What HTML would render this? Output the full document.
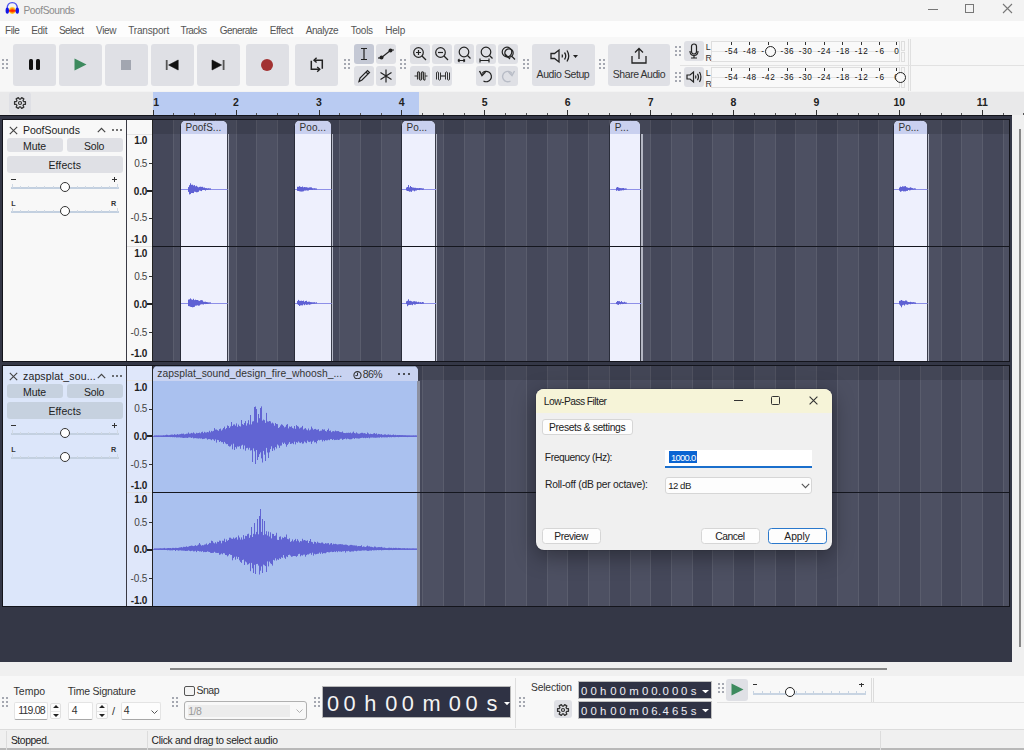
<!DOCTYPE html><html><head><meta charset="utf-8"><style>

*{box-sizing:border-box;margin:0;padding:0}
html,body{width:1024px;height:750px;overflow:hidden;background:#f3f3f3;font-family:"Liberation Sans",sans-serif;font-size:12px;color:#1a1a1a}
.ab{position:absolute}
.t{position:absolute;white-space:nowrap;line-height:1}
.btn{position:absolute;background:#dfe0e5;border-radius:3px}
.grip{position:absolute;width:6px;height:10px}
.grip i{position:absolute;width:2px;height:2px;background:#8a8e9a;border-radius:1px}

</style></head><body>
<div class="ab" style="left:0;top:0;width:1024px;height:21px;background:#f3f3f3"></div>
<svg class="ab" style="left:0;top:0" width="24" height="18" viewBox="0 0 24 18"><defs><radialGradient id="ag" cx="0.5" cy="0.55" r="0.55"><stop offset="0" stop-color="#ff2a00"/><stop offset="0.35" stop-color="#ff6a00"/><stop offset="0.7" stop-color="#ffc21a"/><stop offset="1" stop-color="#fff0a0" stop-opacity="0.6"/></radialGradient></defs><path d="M7.2 8.5 Q7.2 2.6 12.2 2.6 Q17.3 2.6 17.3 8.5" fill="none" stroke="#4b52ee" stroke-width="1.3"/><ellipse cx="12.3" cy="10.2" rx="3.6" ry="3.7" fill="url(#ag)"/><rect x="8.8" y="9.8" width="7" height="1.9" fill="#ff2200" opacity="0.85"/><ellipse cx="7.3" cy="10.6" rx="1.7" ry="3.2" fill="#1414e6"/><ellipse cx="17.3" cy="10.6" rx="1.7" ry="3.2" fill="#1414e6"/></svg>
<div class="t" style="left:23.50px;top:6.00px;font-size:10.20px;color:#8c8c8c;letter-spacing:-0.453px;">PoofSounds</div>
<div class="ab" style="left:928px;top:9px;width:10px;height:1px;background:#777"></div>
<div class="ab" style="left:965px;top:4px;width:9px;height:9px;border:1px solid #777"></div>
<svg class="ab" style="left:1002px;top:3px" width="11" height="11"><path d="M1 1 L10 10 M10 1 L1 10" stroke="#777" stroke-width="1.1"/></svg>
<div class="ab" style="left:0;top:21px;width:1024px;height:16px;background:#fdfdfd"></div>
<div class="t" style="left:5.10px;top:26.00px;font-size:10.00px;color:#555;letter-spacing:-0.438px;">File</div>
<div class="t" style="left:31.20px;top:26.00px;font-size:10.00px;color:#555;letter-spacing:-0.277px;">Edit</div>
<div class="t" style="left:59.00px;top:26.00px;font-size:10.00px;color:#555;letter-spacing:-0.558px;">Select</div>
<div class="t" style="left:96.00px;top:26.00px;font-size:10.00px;color:#555;letter-spacing:-0.331px;">View</div>
<div class="t" style="left:128.20px;top:26.00px;font-size:10.00px;color:#555;letter-spacing:-0.177px;">Transport</div>
<div class="t" style="left:180.50px;top:26.00px;font-size:10.00px;color:#555;letter-spacing:-0.606px;">Tracks</div>
<div class="t" style="left:219.80px;top:26.00px;font-size:10.00px;color:#555;letter-spacing:-0.556px;">Generate</div>
<div class="t" style="left:269.80px;top:26.00px;font-size:10.00px;color:#555;letter-spacing:-0.357px;">Effect</div>
<div class="t" style="left:305.70px;top:26.00px;font-size:10.00px;color:#555;letter-spacing:-0.446px;">Analyze</div>
<div class="t" style="left:350.80px;top:26.00px;font-size:10.00px;color:#555;letter-spacing:-0.261px;">Tools</div>
<div class="t" style="left:385.20px;top:26.00px;font-size:10.00px;color:#555;letter-spacing:-0.189px;">Help</div>
<div class="ab" style="left:0;top:37px;width:1024px;height:54px;background:#f7f7f7"></div>
<div class="grip" style="left:2px;top:59px"><i style="left:0px;top:0px"></i><i style="left:4px;top:0px"></i><i style="left:0px;top:4px"></i><i style="left:4px;top:4px"></i><i style="left:0px;top:8px"></i><i style="left:4px;top:8px"></i></div>
<div class="btn" style="left:13px;top:44px;width:43px;height:42px"></div>
<div class="btn" style="left:59px;top:44px;width:43px;height:42px"></div>
<div class="btn" style="left:105px;top:44px;width:43px;height:42px"></div>
<div class="btn" style="left:151px;top:44px;width:43px;height:42px"></div>
<div class="btn" style="left:197px;top:44px;width:43px;height:42px"></div>
<div class="btn" style="left:246px;top:44px;width:43px;height:42px"></div>
<div class="btn" style="left:295px;top:44px;width:43px;height:42px"></div>
<div class="ab" style="left:29px;top:59px;width:4px;height:11px;background:#111;border-radius:1.5px"></div>
<div class="ab" style="left:36px;top:59px;width:4px;height:11px;background:#111;border-radius:1.5px"></div>
<svg class="ab" style="left:74px;top:58px" width="13" height="13"><path d="M0.5 0.5 L12.5 6.5 L0.5 12.5 Z" fill="#3d8a5e"/></svg>
<div class="ab" style="left:121px;top:60px;width:10px;height:10px;background:#a2a6b0"></div>
<svg class="ab" style="left:165px;top:59px" width="14" height="12"><rect x="0.8" y="1" width="1.8" height="10" fill="#555"/><path d="M3.6 6 L13.2 1 L13.2 11 Z" fill="#111" stroke="#111" stroke-width="0.6" stroke-linejoin="round"/></svg>
<svg class="ab" style="left:211px;top:59px" width="14" height="12"><rect x="11.7" y="1" width="1.8" height="10" fill="#555"/><path d="M10.6 6 L1 1 L1 11 Z" fill="#111" stroke="#111" stroke-width="0.6" stroke-linejoin="round"/></svg>
<div class="ab" style="left:261px;top:59px;width:12px;height:12px;background:#a23232;border-radius:50%"></div>
<svg class="ab" style="left:306px;top:54px" width="22" height="20"><path d="M16.3 14.7 V6.2 H8.2" fill="none" stroke="#222" stroke-width="1.5"/><path d="M10.6 3.8 L8 6.2 L10.6 8.6" fill="none" stroke="#222" stroke-width="1.4"/><path d="M5.3 6.7 V15.3 H13.5" fill="none" stroke="#222" stroke-width="1.5"/><path d="M11.2 12.9 L13.8 15.3 L11.2 17.7" fill="none" stroke="#222" stroke-width="1.4"/></svg>
<div class="grip" style="left:344px;top:59px"><i style="left:0px;top:0px"></i><i style="left:4px;top:0px"></i><i style="left:0px;top:4px"></i><i style="left:4px;top:4px"></i><i style="left:0px;top:8px"></i><i style="left:4px;top:8px"></i></div>
<div class="btn" style="left:354px;top:44px;width:20px;height:20px;background:#c5c9d5"></div>
<div class="btn" style="left:376px;top:44px;width:20px;height:20px;background:#dfe0e5"></div>
<div class="btn" style="left:354px;top:66px;width:20px;height:20px;background:#dfe0e5"></div>
<div class="btn" style="left:376px;top:66px;width:20px;height:20px;background:#dfe0e5"></div>
<div class="btn" style="left:410px;top:44px;width:20px;height:20px;background:#dfe0e5"></div>
<div class="btn" style="left:432px;top:44px;width:20px;height:20px;background:#dfe0e5"></div>
<div class="btn" style="left:454px;top:44px;width:20px;height:20px;background:#dfe0e5"></div>
<div class="btn" style="left:476px;top:44px;width:20px;height:20px;background:#dfe0e5"></div>
<div class="btn" style="left:498px;top:44px;width:20px;height:20px;background:#dfe0e5"></div>
<div class="btn" style="left:410px;top:66px;width:20px;height:20px;background:#dfe0e5"></div>
<div class="btn" style="left:432px;top:66px;width:20px;height:20px;background:#dfe0e5"></div>
<div class="btn" style="left:476px;top:66px;width:20px;height:20px;background:#dfe0e5"></div>
<div class="btn" style="left:498px;top:66px;width:20px;height:20px;background:#dfe0e5"></div>
<div class="grip" style="left:400px;top:59px"><i style="left:0px;top:0px"></i><i style="left:4px;top:0px"></i><i style="left:0px;top:4px"></i><i style="left:4px;top:4px"></i><i style="left:0px;top:8px"></i><i style="left:4px;top:8px"></i></div>
<svg class="ab" style="left:354px;top:44px" width="20" height="20"><path d="M7 4.5 H13 M10 4.5 V15.5 M7 15.5 H13" stroke="#222" fill="none" stroke-width="1.2"/></svg>
<svg class="ab" style="left:376px;top:44px" width="20" height="20"><path d="M5 14 L15 6 M15 6 H18" stroke="#222" fill="none" stroke-width="1.2"/><circle cx="5.5" cy="13.5" r="2" fill="#222"/><circle cx="14.5" cy="6.5" r="2" fill="#222"/><path d="M2 14 H5" stroke="#222" fill="none" stroke-width="1.2"/></svg>
<svg class="ab" style="left:354px;top:66px" width="20" height="20"><path d="M5 15.5 L6 12 L13.5 4.5 L15.5 6.5 L8 14 Z M12 6 L14 8" stroke="#222" fill="none" stroke-width="1.2"/></svg>
<svg class="ab" style="left:376px;top:66px" width="20" height="20"><path d="M10 3.5 V16.5 M4.5 6.5 L15.5 13.5 M15.5 6.5 L4.5 13.5" stroke="#222" fill="none" stroke-width="1.2"/></svg>
<svg class="ab" style="left:410px;top:44px" width="20" height="20"><circle cx="8.5" cy="8.5" r="4.8" stroke="#222" fill="none" stroke-width="1.2"/><path d="M12 12 L16 16" stroke="#222" fill="none" stroke-width="1.2"/><path d="M6 8.5 H11 M8.5 6 V11" stroke="#222" fill="none" stroke-width="1.2"/></svg>
<svg class="ab" style="left:432px;top:44px" width="20" height="20"><circle cx="8.5" cy="8.5" r="4.8" stroke="#222" fill="none" stroke-width="1.2"/><path d="M12 12 L16 16" stroke="#222" fill="none" stroke-width="1.2"/><path d="M6 8.5 H11" stroke="#222" fill="none" stroke-width="1.2"/></svg>
<svg class="ab" style="left:454px;top:44px" width="20" height="20"><circle cx="10" cy="8" r="4.8" stroke="#222" fill="none" stroke-width="1.2"/><path d="M13.5 11.5 L16.5 14.5" stroke="#222" fill="none" stroke-width="1.2"/><path d="M4 16.5 H11 M4 16.5 L5.5 15 M4 16.5 L5.5 18 M11 16.5 L9.5 15 M11 16.5 L9.5 18" stroke="#222" fill="none" stroke-width="1.2"/></svg>
<svg class="ab" style="left:476px;top:44px" width="20" height="20"><circle cx="10" cy="8" r="4.8" stroke="#222" fill="none" stroke-width="1.2"/><path d="M13.5 11.5 L16.5 14.5" stroke="#222" fill="none" stroke-width="1.2"/><path d="M4 16.5 H13 M4 14.5 V18.5 M13 14.5 V18.5" stroke="#222" fill="none" stroke-width="1.2"/></svg>
<svg class="ab" style="left:498px;top:44px" width="20" height="20"><circle cx="9" cy="8" r="4.8" stroke="#222" fill="none" stroke-width="1.2"/><circle cx="11" cy="9" r="4.2" stroke="#222" fill="none" stroke-width="1.2"/><path d="M14 12.5 L17 15.5 M7 10 L12 15" stroke="#222" fill="none" stroke-width="1.2"/></svg>
<svg class="ab" style="left:410px;top:66px" width="20" height="20"><path d="M4.5 10 H7.5 M15 10 H17.5" stroke="#333" stroke-width="1.2"/><path d="M7.5 13.5 V6.5 Q8.5 5.3 9.5 6.5 V13.5 Q10.5 14.7 11.5 13.5 V6.5 Q12.5 5.3 13.5 6.5 V13.5 Q14.5 14.7 15 13.5 V6.5" fill="none" stroke="#333" stroke-width="1.1"/><path d="M8.5 7 V13 M10.5 7 V13 M12.5 7 V13 M14.5 7 V13" stroke="#999" stroke-width="0.8"/></svg>
<svg class="ab" style="left:432px;top:66px" width="20" height="20"><path d="M8.5 10 H13.5" stroke="#333" stroke-width="1.2"/><path d="M4.5 13.5 V6.5 Q5.5 5.3 6.5 6.5 V13.5 Q7.5 14.7 8.5 13.5 V6.5 M13.5 13.5 V6.5 Q14.5 5.3 15.5 6.5 V13.5 Q16.5 14.7 17.5 13.5 V6.5" fill="none" stroke="#333" stroke-width="1"/></svg>
<svg class="ab" style="left:476px;top:66px" width="20" height="20"><path d="M6 7.5 A5.2 5.2 0 1 1 7.5 15" stroke="#222" fill="none" stroke-width="1.2" stroke-width="1.4"/><path d="M3.5 5 L6 9.5 L9.5 6" fill="none" stroke="#222" stroke-width="1.4"/></svg>
<svg class="ab" style="left:498px;top:66px" width="20" height="20"><path d="M14 7.5 A5.2 5.2 0 1 0 12.5 15" fill="none" stroke="#b8bcc6" stroke-width="1.4"/><path d="M16.5 5 L14 9.5 L10.5 6" fill="none" stroke="#b8bcc6" stroke-width="1.4"/></svg>
<div class="grip" style="left:523px;top:59px"><i style="left:0px;top:0px"></i><i style="left:4px;top:0px"></i><i style="left:0px;top:4px"></i><i style="left:4px;top:4px"></i><i style="left:0px;top:8px"></i><i style="left:4px;top:8px"></i></div>
<div class="btn" style="left:532px;top:44px;width:63px;height:42px;background:#dfe0e5"></div>
<svg class="ab" style="left:549px;top:47px" width="30" height="18" viewBox="0 0 30 18"><path d="M2 6.5 H5.5 L10 3 V15 L5.5 11.5 H2 Z" fill="none" stroke="#222" stroke-width="1.3"/><path d="M13 7.5 Q14 9 13 10.5 M15.5 5.5 Q18 9 15.5 12.5 M18 3.5 Q21.5 9 18 14.5" fill="none" stroke="#222" stroke-width="1.3"/><path d="M24 8 H29 L26.5 11 Z" fill="#222"/></svg>
<div class="t" style="left:536.60px;top:69.00px;font-size:10.50px;color:#333;letter-spacing:-0.411px;">Audio Setup</div>
<div class="grip" style="left:599px;top:59px"><i style="left:0px;top:0px"></i><i style="left:4px;top:0px"></i><i style="left:0px;top:4px"></i><i style="left:4px;top:4px"></i><i style="left:0px;top:8px"></i><i style="left:4px;top:8px"></i></div>
<div class="btn" style="left:608px;top:44px;width:62px;height:42px;background:#dfe0e5"></div>
<svg class="ab" style="left:629px;top:47px" width="20" height="18"><path d="M10 2 V12 M6 5.5 L10 1.5 L14 5.5 M3 9 V16 H17 V9" fill="none" stroke="#222" stroke-width="1.3"/></svg>
<div class="t" style="left:612.80px;top:69.00px;font-size:10.50px;color:#333;letter-spacing:-0.451px;">Share Audio</div>
<div class="grip" style="left:675px;top:46px"><i style="left:0px;top:0px"></i><i style="left:4px;top:0px"></i><i style="left:0px;top:4px"></i><i style="left:4px;top:4px"></i><i style="left:0px;top:8px"></i><i style="left:4px;top:8px"></i></div>
<div class="grip" style="left:675px;top:72px"><i style="left:0px;top:0px"></i><i style="left:4px;top:0px"></i><i style="left:0px;top:4px"></i><i style="left:4px;top:4px"></i><i style="left:0px;top:8px"></i><i style="left:4px;top:8px"></i></div>
<div class="btn" style="left:684px;top:41px;width:20px;height:20px;background:#dfe0e5"></div>
<div class="btn" style="left:684px;top:67px;width:20px;height:20px;background:#dfe0e5"></div>
<svg class="ab" style="left:684px;top:41px" width="20" height="20"><rect x="7.5" y="3" width="5" height="10" rx="2.5" fill="none" stroke="#222" stroke-width="1.2"/><path d="M6 10 Q6 14.5 10 14.5 Q14 14.5 14 10 M10 14.5 V17 M7 17 H13" fill="none" stroke="#222" stroke-width="1.2"/></svg>
<svg class="ab" style="left:684px;top:67px" width="20" height="20"><path d="M3 8 H6 L9.5 5 V15 L6 12 H3 Z" fill="none" stroke="#222" stroke-width="1.2"/><path d="M11.5 8.5 Q12.3 10 11.5 11.5 M13.5 6.8 Q15.5 10 13.5 13.2 M15.5 5 Q18.3 10 15.5 15" fill="none" stroke="#222" stroke-width="1.2"/></svg>
<div class="t" style="left:705.80px;top:43.00px;font-size:8.80px;color:#333;">L</div>
<div class="t" style="left:705.40px;top:54.00px;font-size:8.80px;color:#333;">R</div>
<div class="ab" style="left:711px;top:41px;width:188.5px;height:21px;background:#f9f9f9;border:1px solid #dedede"></div>
<div class="ab" style="left:901px;top:41px;width:3.8px;height:10px;border:1px solid #dedede"></div>
<div class="ab" style="left:901px;top:52px;width:3.8px;height:10px;border:1px solid #dedede"></div>
<div class="ab" style="left:712px;top:51px;width:186px;height:1px;background:#e4e4e4"></div>
<div class="ab" style="left:730.8px;top:42px;width:1px;height:3px;background:#333"></div>
<div class="t" style="left:724.75px;top:48.00px;font-size:8.20px;color:#111;letter-spacing:0.625px;">-54</div>
<div class="ab" style="left:749.1px;top:42px;width:1px;height:3px;background:#333"></div>
<div class="t" style="left:743.05px;top:48.00px;font-size:8.20px;color:#111;letter-spacing:0.625px;">-48</div>
<div class="ab" style="left:767.8px;top:42px;width:1px;height:3px;background:#333"></div>
<div class="t" style="left:761.30px;top:48.00px;font-size:8.20px;color:#111;">-</div>
<div class="ab" style="left:786.6px;top:42px;width:1px;height:3px;background:#333"></div>
<div class="t" style="left:780.55px;top:48.00px;font-size:8.20px;color:#111;letter-spacing:0.625px;">-36</div>
<div class="ab" style="left:804.9px;top:42px;width:1px;height:3px;background:#333"></div>
<div class="t" style="left:798.85px;top:48.00px;font-size:8.20px;color:#111;letter-spacing:0.625px;">-30</div>
<div class="ab" style="left:823.5px;top:42px;width:1px;height:3px;background:#333"></div>
<div class="t" style="left:817.45px;top:48.00px;font-size:8.20px;color:#111;letter-spacing:0.625px;">-24</div>
<div class="ab" style="left:842.4px;top:42px;width:1px;height:3px;background:#333"></div>
<div class="t" style="left:836.35px;top:48.00px;font-size:8.20px;color:#111;letter-spacing:0.625px;">-18</div>
<div class="ab" style="left:860.7px;top:42px;width:1px;height:3px;background:#333"></div>
<div class="t" style="left:854.65px;top:48.00px;font-size:8.20px;color:#111;letter-spacing:0.625px;">-12</div>
<div class="ab" style="left:879.2px;top:42px;width:1px;height:3px;background:#333"></div>
<div class="t" style="left:875.20px;top:48.00px;font-size:8.20px;color:#111;letter-spacing:1.710px;">-6</div>
<div class="ab" style="left:896.0px;top:42px;width:1px;height:3px;background:#333"></div>
<div class="t" style="left:894.22px;top:48.00px;font-size:8.20px;color:#111;">0</div>
<div class="ab" style="left:765.4px;top:46.2px;width:11px;height:11px;border:1.3px solid #222;border-radius:50%;background:#f9f9f9"></div>
<div class="t" style="left:705.80px;top:69.00px;font-size:8.80px;color:#333;">L</div>
<div class="t" style="left:705.40px;top:80.00px;font-size:8.80px;color:#333;">R</div>
<div class="ab" style="left:711px;top:67px;width:188.5px;height:21px;background:#f9f9f9;border:1px solid #dedede"></div>
<div class="ab" style="left:901px;top:67px;width:3.8px;height:10px;border:1px solid #dedede"></div>
<div class="ab" style="left:901px;top:78px;width:3.8px;height:10px;border:1px solid #dedede"></div>
<div class="ab" style="left:712px;top:77px;width:186px;height:1px;background:#e4e4e4"></div>
<div class="ab" style="left:730.8px;top:68px;width:1px;height:3px;background:#333"></div>
<div class="t" style="left:724.75px;top:74.00px;font-size:8.20px;color:#111;letter-spacing:0.625px;">-54</div>
<div class="ab" style="left:749.1px;top:68px;width:1px;height:3px;background:#333"></div>
<div class="t" style="left:743.05px;top:74.00px;font-size:8.20px;color:#111;letter-spacing:0.625px;">-48</div>
<div class="ab" style="left:767.8px;top:68px;width:1px;height:3px;background:#333"></div>
<div class="t" style="left:761.75px;top:74.00px;font-size:8.20px;color:#111;letter-spacing:0.625px;">-42</div>
<div class="ab" style="left:786.6px;top:68px;width:1px;height:3px;background:#333"></div>
<div class="t" style="left:780.55px;top:74.00px;font-size:8.20px;color:#111;letter-spacing:0.625px;">-36</div>
<div class="ab" style="left:804.9px;top:68px;width:1px;height:3px;background:#333"></div>
<div class="t" style="left:798.85px;top:74.00px;font-size:8.20px;color:#111;letter-spacing:0.625px;">-30</div>
<div class="ab" style="left:823.5px;top:68px;width:1px;height:3px;background:#333"></div>
<div class="t" style="left:817.45px;top:74.00px;font-size:8.20px;color:#111;letter-spacing:0.625px;">-24</div>
<div class="ab" style="left:842.4px;top:68px;width:1px;height:3px;background:#333"></div>
<div class="t" style="left:836.35px;top:74.00px;font-size:8.20px;color:#111;letter-spacing:0.625px;">-18</div>
<div class="ab" style="left:860.7px;top:68px;width:1px;height:3px;background:#333"></div>
<div class="t" style="left:854.65px;top:74.00px;font-size:8.20px;color:#111;letter-spacing:0.625px;">-12</div>
<div class="ab" style="left:879.2px;top:68px;width:1px;height:3px;background:#333"></div>
<div class="t" style="left:875.20px;top:74.00px;font-size:8.20px;color:#111;letter-spacing:1.710px;">-6</div>
<div class="ab" style="left:896.0px;top:68px;width:1px;height:3px;background:#333"></div>
<div class="t" style="left:894.22px;top:74.00px;font-size:8.20px;color:#111;">0</div>
<div class="ab" style="left:894.8px;top:72.2px;width:11px;height:11px;border:1.3px solid #222;border-radius:50%;background:#f9f9f9"></div>
<div class="ab" style="left:908px;top:39px;width:1px;height:52px;background:#e0e0e0"></div>
<div class="ab" style="left:910px;top:39px;width:1px;height:52px;background:#e0e0e0"></div>
<div class="ab" style="left:680px;top:65px;width:344px;height:1px;background:#e2e2e2"></div>
<div class="ab" style="left:0;top:92px;width:1024px;height:23px;background:#e9e9ea"></div>
<div class="ab" style="left:153px;top:92px;width:266px;height:23px;background:#b9cbf2"></div>
<div class="btn" style="left:9px;top:92px;width:22px;height:22px;background:#dfe0e5"></div>
<svg class="ab" style="left:11.8px;top:94.5px" width="16" height="16" viewBox="0 0 16 16"><path d="M11.62 6.54 L13.46 6.74 L13.46 9.26 L11.62 9.46 L11.07 10.40 L11.82 12.10 L9.64 13.36 L8.54 11.86 L7.46 11.86 L6.36 13.36 L4.18 12.10 L4.93 10.40 L4.38 9.46 L2.54 9.26 L2.54 6.74 L4.38 6.54 L4.93 5.60 L4.18 3.90 L6.36 2.64 L7.46 4.14 L8.54 4.14 L9.64 2.64 L11.82 3.90 L11.07 5.60 Z" fill="none" stroke="#333" stroke-width="1.25" stroke-linejoin="round"/><circle cx="8" cy="8" r="1.5" fill="none" stroke="#333" stroke-width="1.2"/></svg>
<div class="t" style="left:153.20px;top:97.00px;font-size:10.50px;color:#222;font-weight:bold;">1</div>
<div class="ab" style="left:153px;top:110px;width:1px;height:5px;background:#333"></div>
<div class="ab" style="left:173px;top:112.5px;width:1px;height:2.5px;background:#555"></div>
<div class="ab" style="left:194px;top:112.5px;width:1px;height:2.5px;background:#555"></div>
<div class="ab" style="left:215px;top:112.5px;width:1px;height:2.5px;background:#555"></div>
<div class="t" style="left:233.01px;top:97.00px;font-size:10.50px;color:#222;font-weight:bold;">2</div>
<div class="ab" style="left:236px;top:110px;width:1px;height:5px;background:#333"></div>
<div class="ab" style="left:256px;top:112.5px;width:1px;height:2.5px;background:#555"></div>
<div class="ab" style="left:277px;top:112.5px;width:1px;height:2.5px;background:#555"></div>
<div class="ab" style="left:298px;top:112.5px;width:1px;height:2.5px;background:#555"></div>
<div class="t" style="left:315.94px;top:97.00px;font-size:10.50px;color:#222;font-weight:bold;">3</div>
<div class="ab" style="left:319px;top:110px;width:1px;height:5px;background:#333"></div>
<div class="ab" style="left:339px;top:112.5px;width:1px;height:2.5px;background:#555"></div>
<div class="ab" style="left:360px;top:112.5px;width:1px;height:2.5px;background:#555"></div>
<div class="ab" style="left:381px;top:112.5px;width:1px;height:2.5px;background:#555"></div>
<div class="t" style="left:398.87px;top:97.00px;font-size:10.50px;color:#222;font-weight:bold;">4</div>
<div class="ab" style="left:401px;top:110px;width:1px;height:5px;background:#333"></div>
<div class="ab" style="left:422px;top:112.5px;width:1px;height:2.5px;background:#555"></div>
<div class="ab" style="left:443px;top:112.5px;width:1px;height:2.5px;background:#555"></div>
<div class="ab" style="left:464px;top:112.5px;width:1px;height:2.5px;background:#555"></div>
<div class="t" style="left:481.80px;top:97.00px;font-size:10.50px;color:#222;font-weight:bold;">5</div>
<div class="ab" style="left:484px;top:110px;width:1px;height:5px;background:#333"></div>
<div class="ab" style="left:505px;top:112.5px;width:1px;height:2.5px;background:#555"></div>
<div class="ab" style="left:526px;top:112.5px;width:1px;height:2.5px;background:#555"></div>
<div class="ab" style="left:547px;top:112.5px;width:1px;height:2.5px;background:#555"></div>
<div class="t" style="left:564.73px;top:97.00px;font-size:10.50px;color:#222;font-weight:bold;">6</div>
<div class="ab" style="left:567px;top:110px;width:1px;height:5px;background:#333"></div>
<div class="ab" style="left:588px;top:112.5px;width:1px;height:2.5px;background:#555"></div>
<div class="ab" style="left:609px;top:112.5px;width:1px;height:2.5px;background:#555"></div>
<div class="ab" style="left:630px;top:112.5px;width:1px;height:2.5px;background:#555"></div>
<div class="t" style="left:647.66px;top:97.00px;font-size:10.50px;color:#222;font-weight:bold;">7</div>
<div class="ab" style="left:650px;top:110px;width:1px;height:5px;background:#333"></div>
<div class="ab" style="left:671px;top:112.5px;width:1px;height:2.5px;background:#555"></div>
<div class="ab" style="left:692px;top:112.5px;width:1px;height:2.5px;background:#555"></div>
<div class="ab" style="left:712px;top:112.5px;width:1px;height:2.5px;background:#555"></div>
<div class="t" style="left:730.59px;top:97.00px;font-size:10.50px;color:#222;font-weight:bold;">8</div>
<div class="ab" style="left:733px;top:110px;width:1px;height:5px;background:#333"></div>
<div class="ab" style="left:754px;top:112.5px;width:1px;height:2.5px;background:#555"></div>
<div class="ab" style="left:775px;top:112.5px;width:1px;height:2.5px;background:#555"></div>
<div class="ab" style="left:795px;top:112.5px;width:1px;height:2.5px;background:#555"></div>
<div class="t" style="left:813.52px;top:97.00px;font-size:10.50px;color:#222;font-weight:bold;">9</div>
<div class="ab" style="left:816px;top:110px;width:1px;height:5px;background:#333"></div>
<div class="ab" style="left:837px;top:112.5px;width:1px;height:2.5px;background:#555"></div>
<div class="ab" style="left:858px;top:112.5px;width:1px;height:2.5px;background:#555"></div>
<div class="ab" style="left:878px;top:112.5px;width:1px;height:2.5px;background:#555"></div>
<div class="t" style="left:893.53px;top:97.00px;font-size:10.50px;color:#222;font-weight:bold;">10</div>
<div class="ab" style="left:899px;top:110px;width:1px;height:5px;background:#333"></div>
<div class="ab" style="left:920px;top:112.5px;width:1px;height:2.5px;background:#555"></div>
<div class="ab" style="left:941px;top:112.5px;width:1px;height:2.5px;background:#555"></div>
<div class="ab" style="left:961px;top:112.5px;width:1px;height:2.5px;background:#555"></div>
<div class="t" style="left:976.75px;top:97.00px;font-size:10.50px;color:#222;font-weight:bold;">11</div>
<div class="ab" style="left:982px;top:110px;width:1px;height:5px;background:#333"></div>
<div class="ab" style="left:1003px;top:112.5px;width:1px;height:2.5px;background:#555"></div>
<div class="ab" style="left:1023px;top:112.5px;width:1px;height:2.5px;background:#555"></div>
<div class="ab" style="left:1044px;top:112.5px;width:1px;height:2.5px;background:#555"></div>
<div class="ab" style="left:0;top:115px;width:1012px;height:547px;background:#343746"></div>
<div class="ab" style="left:1012px;top:115px;width:12px;height:547px;background:#f0f0f0"></div>
<div class="ab" style="left:1019px;top:129px;width:2px;height:518px;background:#888"></div>
<div class="ab" style="left:0;top:115px;width:1012px;height:1px;background:#14151c"></div>
<div class="ab" style="left:2px;top:119px;width:1008px;height:243px;background:#14151c"></div>
<div class="ab" style="left:2px;top:365px;width:1008px;height:242px;background:#14151c"></div>
<div class="ab" style="left:153px;top:120px;width:856px;height:241px;overflow:hidden;background:#454858"><div class="ab" style="left:0px;top:0;width:20px;height:241px;background:#45485a"></div><div class="ab" style="left:20px;top:0;width:21px;height:241px;background:#4d5062"></div><div class="ab" style="left:20px;top:0;width:1px;height:241px;background:#5a5d6d"></div><div class="ab" style="left:41px;top:0;width:21px;height:241px;background:#45485a"></div><div class="ab" style="left:41px;top:0;width:1px;height:241px;background:#5a5d6d"></div><div class="ab" style="left:62px;top:0;width:21px;height:241px;background:#4d5062"></div><div class="ab" style="left:62px;top:0;width:1px;height:241px;background:#5a5d6d"></div><div class="ab" style="left:83px;top:0;width:20px;height:241px;background:#45485a"></div><div class="ab" style="left:83px;top:0;width:1px;height:241px;background:#5a5d6d"></div><div class="ab" style="left:103px;top:0;width:21px;height:241px;background:#4d5062"></div><div class="ab" style="left:103px;top:0;width:1px;height:241px;background:#5a5d6d"></div><div class="ab" style="left:124px;top:0;width:21px;height:241px;background:#45485a"></div><div class="ab" style="left:124px;top:0;width:1px;height:241px;background:#5a5d6d"></div><div class="ab" style="left:145px;top:0;width:21px;height:241px;background:#4d5062"></div><div class="ab" style="left:145px;top:0;width:1px;height:241px;background:#5a5d6d"></div><div class="ab" style="left:166px;top:0;width:20px;height:241px;background:#45485a"></div><div class="ab" style="left:166px;top:0;width:1px;height:241px;background:#5a5d6d"></div><div class="ab" style="left:186px;top:0;width:21px;height:241px;background:#4d5062"></div><div class="ab" style="left:186px;top:0;width:1px;height:241px;background:#5a5d6d"></div><div class="ab" style="left:207px;top:0;width:21px;height:241px;background:#45485a"></div><div class="ab" style="left:207px;top:0;width:1px;height:241px;background:#5a5d6d"></div><div class="ab" style="left:228px;top:0;width:20px;height:241px;background:#4d5062"></div><div class="ab" style="left:228px;top:0;width:1px;height:241px;background:#5a5d6d"></div><div class="ab" style="left:248px;top:0;width:21px;height:241px;background:#45485a"></div><div class="ab" style="left:248px;top:0;width:1px;height:241px;background:#5a5d6d"></div><div class="ab" style="left:269px;top:0;width:21px;height:241px;background:#4d5062"></div><div class="ab" style="left:269px;top:0;width:1px;height:241px;background:#5a5d6d"></div><div class="ab" style="left:290px;top:0;width:21px;height:241px;background:#45485a"></div><div class="ab" style="left:290px;top:0;width:1px;height:241px;background:#5a5d6d"></div><div class="ab" style="left:311px;top:0;width:20px;height:241px;background:#4d5062"></div><div class="ab" style="left:311px;top:0;width:1px;height:241px;background:#5a5d6d"></div><div class="ab" style="left:331px;top:0;width:21px;height:241px;background:#45485a"></div><div class="ab" style="left:331px;top:0;width:1px;height:241px;background:#5a5d6d"></div><div class="ab" style="left:352px;top:0;width:21px;height:241px;background:#4d5062"></div><div class="ab" style="left:352px;top:0;width:1px;height:241px;background:#5a5d6d"></div><div class="ab" style="left:373px;top:0;width:21px;height:241px;background:#45485a"></div><div class="ab" style="left:373px;top:0;width:1px;height:241px;background:#5a5d6d"></div><div class="ab" style="left:394px;top:0;width:20px;height:241px;background:#4d5062"></div><div class="ab" style="left:394px;top:0;width:1px;height:241px;background:#5a5d6d"></div><div class="ab" style="left:414px;top:0;width:21px;height:241px;background:#45485a"></div><div class="ab" style="left:414px;top:0;width:1px;height:241px;background:#5a5d6d"></div><div class="ab" style="left:435px;top:0;width:21px;height:241px;background:#4d5062"></div><div class="ab" style="left:435px;top:0;width:1px;height:241px;background:#5a5d6d"></div><div class="ab" style="left:456px;top:0;width:21px;height:241px;background:#45485a"></div><div class="ab" style="left:456px;top:0;width:1px;height:241px;background:#5a5d6d"></div><div class="ab" style="left:477px;top:0;width:20px;height:241px;background:#4d5062"></div><div class="ab" style="left:477px;top:0;width:1px;height:241px;background:#5a5d6d"></div><div class="ab" style="left:497px;top:0;width:21px;height:241px;background:#45485a"></div><div class="ab" style="left:497px;top:0;width:1px;height:241px;background:#5a5d6d"></div><div class="ab" style="left:518px;top:0;width:21px;height:241px;background:#4d5062"></div><div class="ab" style="left:518px;top:0;width:1px;height:241px;background:#5a5d6d"></div><div class="ab" style="left:539px;top:0;width:20px;height:241px;background:#45485a"></div><div class="ab" style="left:539px;top:0;width:1px;height:241px;background:#5a5d6d"></div><div class="ab" style="left:559px;top:0;width:21px;height:241px;background:#4d5062"></div><div class="ab" style="left:559px;top:0;width:1px;height:241px;background:#5a5d6d"></div><div class="ab" style="left:580px;top:0;width:21px;height:241px;background:#45485a"></div><div class="ab" style="left:580px;top:0;width:1px;height:241px;background:#5a5d6d"></div><div class="ab" style="left:601px;top:0;width:21px;height:241px;background:#4d5062"></div><div class="ab" style="left:601px;top:0;width:1px;height:241px;background:#5a5d6d"></div><div class="ab" style="left:622px;top:0;width:20px;height:241px;background:#45485a"></div><div class="ab" style="left:622px;top:0;width:1px;height:241px;background:#5a5d6d"></div><div class="ab" style="left:642px;top:0;width:21px;height:241px;background:#4d5062"></div><div class="ab" style="left:642px;top:0;width:1px;height:241px;background:#5a5d6d"></div><div class="ab" style="left:663px;top:0;width:21px;height:241px;background:#45485a"></div><div class="ab" style="left:663px;top:0;width:1px;height:241px;background:#5a5d6d"></div><div class="ab" style="left:684px;top:0;width:21px;height:241px;background:#4d5062"></div><div class="ab" style="left:684px;top:0;width:1px;height:241px;background:#5a5d6d"></div><div class="ab" style="left:705px;top:0;width:20px;height:241px;background:#45485a"></div><div class="ab" style="left:705px;top:0;width:1px;height:241px;background:#5a5d6d"></div><div class="ab" style="left:725px;top:0;width:21px;height:241px;background:#4d5062"></div><div class="ab" style="left:725px;top:0;width:1px;height:241px;background:#5a5d6d"></div><div class="ab" style="left:746px;top:0;width:21px;height:241px;background:#45485a"></div><div class="ab" style="left:746px;top:0;width:1px;height:241px;background:#5a5d6d"></div><div class="ab" style="left:767px;top:0;width:21px;height:241px;background:#4d5062"></div><div class="ab" style="left:767px;top:0;width:1px;height:241px;background:#5a5d6d"></div><div class="ab" style="left:788px;top:0;width:20px;height:241px;background:#45485a"></div><div class="ab" style="left:788px;top:0;width:1px;height:241px;background:#5a5d6d"></div><div class="ab" style="left:808px;top:0;width:21px;height:241px;background:#4d5062"></div><div class="ab" style="left:808px;top:0;width:1px;height:241px;background:#5a5d6d"></div><div class="ab" style="left:829px;top:0;width:21px;height:241px;background:#45485a"></div><div class="ab" style="left:829px;top:0;width:1px;height:241px;background:#5a5d6d"></div><div class="ab" style="left:850px;top:0;width:20px;height:241px;background:#4d5062"></div><div class="ab" style="left:850px;top:0;width:1px;height:241px;background:#5a5d6d"></div><div class="ab" style="left:870px;top:0;width:21px;height:241px;background:#45485a"></div><div class="ab" style="left:870px;top:0;width:1px;height:241px;background:#5a5d6d"></div><div class="ab" style="left:0;top:0;width:856px;height:14px;background:rgba(0,0,0,0.12)"></div></div>
<div class="ab" style="left:153px;top:366px;width:856px;height:240px;overflow:hidden;background:#454858"><div class="ab" style="left:0px;top:0;width:20px;height:240px;background:#45485a"></div><div class="ab" style="left:20px;top:0;width:21px;height:240px;background:#4d5062"></div><div class="ab" style="left:20px;top:0;width:1px;height:240px;background:#5a5d6d"></div><div class="ab" style="left:41px;top:0;width:21px;height:240px;background:#45485a"></div><div class="ab" style="left:41px;top:0;width:1px;height:240px;background:#5a5d6d"></div><div class="ab" style="left:62px;top:0;width:21px;height:240px;background:#4d5062"></div><div class="ab" style="left:62px;top:0;width:1px;height:240px;background:#5a5d6d"></div><div class="ab" style="left:83px;top:0;width:20px;height:240px;background:#45485a"></div><div class="ab" style="left:83px;top:0;width:1px;height:240px;background:#5a5d6d"></div><div class="ab" style="left:103px;top:0;width:21px;height:240px;background:#4d5062"></div><div class="ab" style="left:103px;top:0;width:1px;height:240px;background:#5a5d6d"></div><div class="ab" style="left:124px;top:0;width:21px;height:240px;background:#45485a"></div><div class="ab" style="left:124px;top:0;width:1px;height:240px;background:#5a5d6d"></div><div class="ab" style="left:145px;top:0;width:21px;height:240px;background:#4d5062"></div><div class="ab" style="left:145px;top:0;width:1px;height:240px;background:#5a5d6d"></div><div class="ab" style="left:166px;top:0;width:20px;height:240px;background:#45485a"></div><div class="ab" style="left:166px;top:0;width:1px;height:240px;background:#5a5d6d"></div><div class="ab" style="left:186px;top:0;width:21px;height:240px;background:#4d5062"></div><div class="ab" style="left:186px;top:0;width:1px;height:240px;background:#5a5d6d"></div><div class="ab" style="left:207px;top:0;width:21px;height:240px;background:#45485a"></div><div class="ab" style="left:207px;top:0;width:1px;height:240px;background:#5a5d6d"></div><div class="ab" style="left:228px;top:0;width:20px;height:240px;background:#4d5062"></div><div class="ab" style="left:228px;top:0;width:1px;height:240px;background:#5a5d6d"></div><div class="ab" style="left:248px;top:0;width:21px;height:240px;background:#45485a"></div><div class="ab" style="left:248px;top:0;width:1px;height:240px;background:#5a5d6d"></div><div class="ab" style="left:269px;top:0;width:21px;height:240px;background:#4d5062"></div><div class="ab" style="left:269px;top:0;width:1px;height:240px;background:#5a5d6d"></div><div class="ab" style="left:290px;top:0;width:21px;height:240px;background:#45485a"></div><div class="ab" style="left:290px;top:0;width:1px;height:240px;background:#5a5d6d"></div><div class="ab" style="left:311px;top:0;width:20px;height:240px;background:#4d5062"></div><div class="ab" style="left:311px;top:0;width:1px;height:240px;background:#5a5d6d"></div><div class="ab" style="left:331px;top:0;width:21px;height:240px;background:#45485a"></div><div class="ab" style="left:331px;top:0;width:1px;height:240px;background:#5a5d6d"></div><div class="ab" style="left:352px;top:0;width:21px;height:240px;background:#4d5062"></div><div class="ab" style="left:352px;top:0;width:1px;height:240px;background:#5a5d6d"></div><div class="ab" style="left:373px;top:0;width:21px;height:240px;background:#45485a"></div><div class="ab" style="left:373px;top:0;width:1px;height:240px;background:#5a5d6d"></div><div class="ab" style="left:394px;top:0;width:20px;height:240px;background:#4d5062"></div><div class="ab" style="left:394px;top:0;width:1px;height:240px;background:#5a5d6d"></div><div class="ab" style="left:414px;top:0;width:21px;height:240px;background:#45485a"></div><div class="ab" style="left:414px;top:0;width:1px;height:240px;background:#5a5d6d"></div><div class="ab" style="left:435px;top:0;width:21px;height:240px;background:#4d5062"></div><div class="ab" style="left:435px;top:0;width:1px;height:240px;background:#5a5d6d"></div><div class="ab" style="left:456px;top:0;width:21px;height:240px;background:#45485a"></div><div class="ab" style="left:456px;top:0;width:1px;height:240px;background:#5a5d6d"></div><div class="ab" style="left:477px;top:0;width:20px;height:240px;background:#4d5062"></div><div class="ab" style="left:477px;top:0;width:1px;height:240px;background:#5a5d6d"></div><div class="ab" style="left:497px;top:0;width:21px;height:240px;background:#45485a"></div><div class="ab" style="left:497px;top:0;width:1px;height:240px;background:#5a5d6d"></div><div class="ab" style="left:518px;top:0;width:21px;height:240px;background:#4d5062"></div><div class="ab" style="left:518px;top:0;width:1px;height:240px;background:#5a5d6d"></div><div class="ab" style="left:539px;top:0;width:20px;height:240px;background:#45485a"></div><div class="ab" style="left:539px;top:0;width:1px;height:240px;background:#5a5d6d"></div><div class="ab" style="left:559px;top:0;width:21px;height:240px;background:#4d5062"></div><div class="ab" style="left:559px;top:0;width:1px;height:240px;background:#5a5d6d"></div><div class="ab" style="left:580px;top:0;width:21px;height:240px;background:#45485a"></div><div class="ab" style="left:580px;top:0;width:1px;height:240px;background:#5a5d6d"></div><div class="ab" style="left:601px;top:0;width:21px;height:240px;background:#4d5062"></div><div class="ab" style="left:601px;top:0;width:1px;height:240px;background:#5a5d6d"></div><div class="ab" style="left:622px;top:0;width:20px;height:240px;background:#45485a"></div><div class="ab" style="left:622px;top:0;width:1px;height:240px;background:#5a5d6d"></div><div class="ab" style="left:642px;top:0;width:21px;height:240px;background:#4d5062"></div><div class="ab" style="left:642px;top:0;width:1px;height:240px;background:#5a5d6d"></div><div class="ab" style="left:663px;top:0;width:21px;height:240px;background:#45485a"></div><div class="ab" style="left:663px;top:0;width:1px;height:240px;background:#5a5d6d"></div><div class="ab" style="left:684px;top:0;width:21px;height:240px;background:#4d5062"></div><div class="ab" style="left:684px;top:0;width:1px;height:240px;background:#5a5d6d"></div><div class="ab" style="left:705px;top:0;width:20px;height:240px;background:#45485a"></div><div class="ab" style="left:705px;top:0;width:1px;height:240px;background:#5a5d6d"></div><div class="ab" style="left:725px;top:0;width:21px;height:240px;background:#4d5062"></div><div class="ab" style="left:725px;top:0;width:1px;height:240px;background:#5a5d6d"></div><div class="ab" style="left:746px;top:0;width:21px;height:240px;background:#45485a"></div><div class="ab" style="left:746px;top:0;width:1px;height:240px;background:#5a5d6d"></div><div class="ab" style="left:767px;top:0;width:21px;height:240px;background:#4d5062"></div><div class="ab" style="left:767px;top:0;width:1px;height:240px;background:#5a5d6d"></div><div class="ab" style="left:788px;top:0;width:20px;height:240px;background:#45485a"></div><div class="ab" style="left:788px;top:0;width:1px;height:240px;background:#5a5d6d"></div><div class="ab" style="left:808px;top:0;width:21px;height:240px;background:#4d5062"></div><div class="ab" style="left:808px;top:0;width:1px;height:240px;background:#5a5d6d"></div><div class="ab" style="left:829px;top:0;width:21px;height:240px;background:#45485a"></div><div class="ab" style="left:829px;top:0;width:1px;height:240px;background:#5a5d6d"></div><div class="ab" style="left:850px;top:0;width:20px;height:240px;background:#4d5062"></div><div class="ab" style="left:850px;top:0;width:1px;height:240px;background:#5a5d6d"></div><div class="ab" style="left:870px;top:0;width:21px;height:240px;background:#45485a"></div><div class="ab" style="left:870px;top:0;width:1px;height:240px;background:#5a5d6d"></div><div class="ab" style="left:0;top:0;width:856px;height:14px;background:rgba(0,0,0,0.12)"></div></div>
<div class="ab" style="left:3px;top:120px;width:123px;height:241px;background:#f8f8f8"></div>
<div class="ab" style="left:126px;top:120px;width:1px;height:241px;background:#3a3a44"></div>
<div class="ab" style="left:127px;top:120px;width:25px;height:241px;background:#f8f8f8"></div>
<div class="ab" style="left:152px;top:120px;width:1px;height:241px;background:#222"></div>
<div class="ab" style="left:127px;top:134px;width:25px;height:1px;background:#e4e4e4"></div>
<svg class="ab" style="left:9px;top:125.5px" width="9" height="9"><path d="M0.8 0.8 L8.2 8.2 M8.2 0.8 L0.8 8.2" stroke="#444" stroke-width="1.1"/></svg>
<div class="t" style="left:23.00px;top:125.00px;font-size:10.50px;color:#222;letter-spacing:-0.034px;">PoofSounds</div>
<svg class="ab" style="left:97px;top:127.0px" width="9" height="6"><path d="M0.8 5.2 L4.5 1.3 L8.2 5.2" fill="none" stroke="#444" stroke-width="1.2"/></svg>
<div class="ab" style="left:111.5px;top:128.5px;width:2px;height:2px;background:#444;border-radius:1px"></div>
<div class="ab" style="left:115.5px;top:128.5px;width:2px;height:2px;background:#444;border-radius:1px"></div>
<div class="ab" style="left:119.5px;top:128.5px;width:2px;height:2px;background:#444;border-radius:1px"></div>
<div class="btn" style="left:7px;top:138.2px;width:56px;height:14px;background:#dfe0e5"></div>
<div class="btn" style="left:67px;top:138.2px;width:56px;height:14px;background:#dfe0e5"></div>
<div class="t" style="left:23.10px;top:141.00px;font-size:10.50px;color:#222;letter-spacing:-0.114px;">Mute</div>
<div class="t" style="left:83.90px;top:141.00px;font-size:10.50px;color:#222;letter-spacing:-0.172px;">Solo</div>
<div class="btn" style="left:7px;top:156.2px;width:116px;height:17px;background:#dfe0e5"></div>
<div class="t" style="left:48.40px;top:160.00px;font-size:10.50px;color:#222;letter-spacing:0.116px;">Effects</div>
<div class="ab" style="left:11.4px;top:178.7px;width:4.4px;height:1.4px;background:#333"></div>
<div class="ab" style="left:112.2px;top:178.7px;width:4.4px;height:1.4px;background:#333"></div>
<div class="ab" style="left:113.7px;top:177.2px;width:1.4px;height:4.4px;background:#333"></div>
<div class="ab" style="left:11.4px;top:187.0px;width:107.3px;height:1.6px;background:#c3d0e0"></div>
<div class="ab" style="left:12px;top:184.0px;width:1px;height:3.5px;background:#d0d9e4"></div>
<div class="ab" style="left:20px;top:185.5px;width:1px;height:2.0px;background:#d0d9e4"></div>
<div class="ab" style="left:28px;top:185.5px;width:1px;height:2.0px;background:#d0d9e4"></div>
<div class="ab" style="left:36px;top:185.5px;width:1px;height:2.0px;background:#d0d9e4"></div>
<div class="ab" style="left:44px;top:185.5px;width:1px;height:2.0px;background:#d0d9e4"></div>
<div class="ab" style="left:53px;top:185.5px;width:1px;height:2.0px;background:#d0d9e4"></div>
<div class="ab" style="left:61px;top:185.5px;width:1px;height:2.0px;background:#d0d9e4"></div>
<div class="ab" style="left:69px;top:185.5px;width:1px;height:2.0px;background:#d0d9e4"></div>
<div class="ab" style="left:77px;top:185.5px;width:1px;height:2.0px;background:#d0d9e4"></div>
<div class="ab" style="left:85px;top:185.5px;width:1px;height:2.0px;background:#d0d9e4"></div>
<div class="ab" style="left:93px;top:185.5px;width:1px;height:2.0px;background:#d0d9e4"></div>
<div class="ab" style="left:101px;top:185.5px;width:1px;height:2.0px;background:#d0d9e4"></div>
<div class="ab" style="left:109px;top:185.5px;width:1px;height:2.0px;background:#d0d9e4"></div>
<div class="ab" style="left:117px;top:184.0px;width:1px;height:3.5px;background:#d0d9e4"></div>
<div class="ab" style="left:59.8px;top:181.9px;width:10px;height:10px;border:1.7px solid #333;border-radius:50%;background:#fff"></div>
<div class="t" style="left:11.20px;top:200.00px;font-size:7.20px;color:#333;font-weight:bold;">L</div>
<div class="t" style="left:111.00px;top:200.00px;font-size:7.20px;color:#333;font-weight:bold;">R</div>
<div class="ab" style="left:11.4px;top:211.3px;width:107.3px;height:1.6px;background:#c3d0e0"></div>
<div class="ab" style="left:12px;top:208.3px;width:1px;height:3.5px;background:#d0d9e4"></div>
<div class="ab" style="left:20px;top:209.8px;width:1px;height:2.0px;background:#d0d9e4"></div>
<div class="ab" style="left:28px;top:209.8px;width:1px;height:2.0px;background:#d0d9e4"></div>
<div class="ab" style="left:36px;top:209.8px;width:1px;height:2.0px;background:#d0d9e4"></div>
<div class="ab" style="left:44px;top:209.8px;width:1px;height:2.0px;background:#d0d9e4"></div>
<div class="ab" style="left:53px;top:209.8px;width:1px;height:2.0px;background:#d0d9e4"></div>
<div class="ab" style="left:61px;top:209.8px;width:1px;height:2.0px;background:#d0d9e4"></div>
<div class="ab" style="left:69px;top:209.8px;width:1px;height:2.0px;background:#d0d9e4"></div>
<div class="ab" style="left:77px;top:209.8px;width:1px;height:2.0px;background:#d0d9e4"></div>
<div class="ab" style="left:85px;top:209.8px;width:1px;height:2.0px;background:#d0d9e4"></div>
<div class="ab" style="left:93px;top:209.8px;width:1px;height:2.0px;background:#d0d9e4"></div>
<div class="ab" style="left:101px;top:209.8px;width:1px;height:2.0px;background:#d0d9e4"></div>
<div class="ab" style="left:109px;top:209.8px;width:1px;height:2.0px;background:#d0d9e4"></div>
<div class="ab" style="left:117px;top:208.3px;width:1px;height:3.5px;background:#d0d9e4"></div>
<div class="ab" style="left:59.8px;top:206.2px;width:10px;height:10px;border:1.7px solid #333;border-radius:50%;background:#fff"></div>
<div class="ab" style="left:3px;top:366px;width:123px;height:240px;background:#dce6fa"></div>
<div class="ab" style="left:126px;top:366px;width:1px;height:240px;background:#3a3a44"></div>
<div class="ab" style="left:127px;top:366px;width:25px;height:240px;background:#dfe7fa"></div>
<div class="ab" style="left:152px;top:366px;width:1px;height:240px;background:#222"></div>
<div class="ab" style="left:127px;top:380px;width:25px;height:1px;background:#e4e4e4"></div>
<svg class="ab" style="left:9px;top:371.5px" width="9" height="9"><path d="M0.8 0.8 L8.2 8.2 M8.2 0.8 L0.8 8.2" stroke="#444" stroke-width="1.1"/></svg>
<div class="t" style="left:23.00px;top:371.00px;font-size:10.50px;color:#222;letter-spacing:0.148px;">zapsplat_sou...</div>
<svg class="ab" style="left:97px;top:373.0px" width="9" height="6"><path d="M0.8 5.2 L4.5 1.3 L8.2 5.2" fill="none" stroke="#444" stroke-width="1.2"/></svg>
<div class="ab" style="left:111.5px;top:374.5px;width:2px;height:2px;background:#444;border-radius:1px"></div>
<div class="ab" style="left:115.5px;top:374.5px;width:2px;height:2px;background:#444;border-radius:1px"></div>
<div class="ab" style="left:119.5px;top:374.5px;width:2px;height:2px;background:#444;border-radius:1px"></div>
<div class="btn" style="left:7px;top:384.2px;width:56px;height:14px;background:#c6d1df"></div>
<div class="btn" style="left:67px;top:384.2px;width:56px;height:14px;background:#c6d1df"></div>
<div class="t" style="left:23.10px;top:387.00px;font-size:10.50px;color:#222;letter-spacing:-0.114px;">Mute</div>
<div class="t" style="left:83.90px;top:387.00px;font-size:10.50px;color:#222;letter-spacing:-0.172px;">Solo</div>
<div class="btn" style="left:7px;top:402.2px;width:116px;height:17px;background:#c6d1df"></div>
<div class="t" style="left:48.40px;top:406.00px;font-size:10.50px;color:#222;letter-spacing:0.116px;">Effects</div>
<div class="ab" style="left:11.4px;top:424.7px;width:4.4px;height:1.4px;background:#333"></div>
<div class="ab" style="left:112.2px;top:424.7px;width:4.4px;height:1.4px;background:#333"></div>
<div class="ab" style="left:113.7px;top:423.2px;width:1.4px;height:4.4px;background:#333"></div>
<div class="ab" style="left:11.4px;top:433.0px;width:107.3px;height:1.6px;background:#c3d0e0"></div>
<div class="ab" style="left:12px;top:430.0px;width:1px;height:3.5px;background:#d0d9e4"></div>
<div class="ab" style="left:20px;top:431.5px;width:1px;height:2.0px;background:#d0d9e4"></div>
<div class="ab" style="left:28px;top:431.5px;width:1px;height:2.0px;background:#d0d9e4"></div>
<div class="ab" style="left:36px;top:431.5px;width:1px;height:2.0px;background:#d0d9e4"></div>
<div class="ab" style="left:44px;top:431.5px;width:1px;height:2.0px;background:#d0d9e4"></div>
<div class="ab" style="left:53px;top:431.5px;width:1px;height:2.0px;background:#d0d9e4"></div>
<div class="ab" style="left:61px;top:431.5px;width:1px;height:2.0px;background:#d0d9e4"></div>
<div class="ab" style="left:69px;top:431.5px;width:1px;height:2.0px;background:#d0d9e4"></div>
<div class="ab" style="left:77px;top:431.5px;width:1px;height:2.0px;background:#d0d9e4"></div>
<div class="ab" style="left:85px;top:431.5px;width:1px;height:2.0px;background:#d0d9e4"></div>
<div class="ab" style="left:93px;top:431.5px;width:1px;height:2.0px;background:#d0d9e4"></div>
<div class="ab" style="left:101px;top:431.5px;width:1px;height:2.0px;background:#d0d9e4"></div>
<div class="ab" style="left:109px;top:431.5px;width:1px;height:2.0px;background:#d0d9e4"></div>
<div class="ab" style="left:117px;top:430.0px;width:1px;height:3.5px;background:#d0d9e4"></div>
<div class="ab" style="left:59.8px;top:427.9px;width:10px;height:10px;border:1.7px solid #333;border-radius:50%;background:#fff"></div>
<div class="t" style="left:11.20px;top:446.00px;font-size:7.20px;color:#333;font-weight:bold;">L</div>
<div class="t" style="left:111.00px;top:446.00px;font-size:7.20px;color:#333;font-weight:bold;">R</div>
<div class="ab" style="left:11.4px;top:457.3px;width:107.3px;height:1.6px;background:#c3d0e0"></div>
<div class="ab" style="left:12px;top:454.3px;width:1px;height:3.5px;background:#d0d9e4"></div>
<div class="ab" style="left:20px;top:455.8px;width:1px;height:2.0px;background:#d0d9e4"></div>
<div class="ab" style="left:28px;top:455.8px;width:1px;height:2.0px;background:#d0d9e4"></div>
<div class="ab" style="left:36px;top:455.8px;width:1px;height:2.0px;background:#d0d9e4"></div>
<div class="ab" style="left:44px;top:455.8px;width:1px;height:2.0px;background:#d0d9e4"></div>
<div class="ab" style="left:53px;top:455.8px;width:1px;height:2.0px;background:#d0d9e4"></div>
<div class="ab" style="left:61px;top:455.8px;width:1px;height:2.0px;background:#d0d9e4"></div>
<div class="ab" style="left:69px;top:455.8px;width:1px;height:2.0px;background:#d0d9e4"></div>
<div class="ab" style="left:77px;top:455.8px;width:1px;height:2.0px;background:#d0d9e4"></div>
<div class="ab" style="left:85px;top:455.8px;width:1px;height:2.0px;background:#d0d9e4"></div>
<div class="ab" style="left:93px;top:455.8px;width:1px;height:2.0px;background:#d0d9e4"></div>
<div class="ab" style="left:101px;top:455.8px;width:1px;height:2.0px;background:#d0d9e4"></div>
<div class="ab" style="left:109px;top:455.8px;width:1px;height:2.0px;background:#d0d9e4"></div>
<div class="ab" style="left:117px;top:454.3px;width:1px;height:3.5px;background:#d0d9e4"></div>
<div class="ab" style="left:59.8px;top:452.2px;width:10px;height:10px;border:1.7px solid #333;border-radius:50%;background:#fff"></div>
<div class="t" style="left:134.30px;top:136.00px;font-size:10.00px;color:#222;letter-spacing:-0.450px;font-weight:bold;">1.0</div>
<div class="t" style="left:134.30px;top:159.00px;font-size:10.00px;color:#444;letter-spacing:-0.450px;">0.5</div>
<div class="t" style="left:133.80px;top:187.00px;font-size:10.00px;color:#222;letter-spacing:-0.200px;font-weight:bold;">0.0</div>
<div class="t" style="left:130.60px;top:213.00px;font-size:10.00px;color:#444;letter-spacing:-0.177px;">-0.5</div>
<div class="t" style="left:130.80px;top:235.00px;font-size:10.00px;color:#222;letter-spacing:-0.243px;font-weight:bold;">-1.0</div>
<div class="ab" style="left:149px;top:162.5px;width:3px;height:1px;background:#333"></div>
<div class="ab" style="left:147px;top:190.2px;width:5px;height:1.6px;background:#222"></div>
<div class="ab" style="left:149px;top:217.5px;width:3px;height:1px;background:#333"></div>
<div class="t" style="left:134.30px;top:249.00px;font-size:10.00px;color:#222;letter-spacing:-0.450px;font-weight:bold;">1.0</div>
<div class="t" style="left:134.30px;top:272.00px;font-size:10.00px;color:#444;letter-spacing:-0.450px;">0.5</div>
<div class="t" style="left:133.80px;top:300.00px;font-size:10.00px;color:#222;letter-spacing:-0.200px;font-weight:bold;">0.0</div>
<div class="t" style="left:130.60px;top:328.00px;font-size:10.00px;color:#444;letter-spacing:-0.177px;">-0.5</div>
<div class="t" style="left:130.80px;top:349.00px;font-size:10.00px;color:#222;letter-spacing:-0.243px;font-weight:bold;">-1.0</div>
<div class="ab" style="left:149px;top:275.5px;width:3px;height:1px;background:#333"></div>
<div class="ab" style="left:147px;top:303.2px;width:5px;height:1.6px;background:#222"></div>
<div class="ab" style="left:149px;top:331.5px;width:3px;height:1px;background:#333"></div>
<div class="t" style="left:134.30px;top:383.00px;font-size:10.00px;color:#222;letter-spacing:-0.450px;font-weight:bold;">1.0</div>
<div class="t" style="left:134.30px;top:404.00px;font-size:10.00px;color:#444;letter-spacing:-0.450px;">0.5</div>
<div class="t" style="left:133.80px;top:432.00px;font-size:10.00px;color:#222;letter-spacing:-0.200px;font-weight:bold;">0.0</div>
<div class="t" style="left:130.60px;top:460.00px;font-size:10.00px;color:#444;letter-spacing:-0.177px;">-0.5</div>
<div class="t" style="left:130.80px;top:481.00px;font-size:10.00px;color:#222;letter-spacing:-0.243px;font-weight:bold;">-1.0</div>
<div class="ab" style="left:149px;top:408.5px;width:3px;height:1px;background:#333"></div>
<div class="ab" style="left:147px;top:435.2px;width:5px;height:1.6px;background:#222"></div>
<div class="ab" style="left:149px;top:463.5px;width:3px;height:1px;background:#333"></div>
<div class="t" style="left:134.30px;top:495.00px;font-size:10.00px;color:#222;letter-spacing:-0.450px;font-weight:bold;">1.0</div>
<div class="t" style="left:134.30px;top:518.00px;font-size:10.00px;color:#444;letter-spacing:-0.450px;">0.5</div>
<div class="t" style="left:133.80px;top:545.00px;font-size:10.00px;color:#222;letter-spacing:-0.200px;font-weight:bold;">0.0</div>
<div class="t" style="left:130.60px;top:574.00px;font-size:10.00px;color:#444;letter-spacing:-0.177px;">-0.5</div>
<div class="t" style="left:130.80px;top:596.00px;font-size:10.00px;color:#222;letter-spacing:-0.243px;font-weight:bold;">-1.0</div>
<div class="ab" style="left:149px;top:521.5px;width:3px;height:1px;background:#333"></div>
<div class="ab" style="left:147px;top:549.2px;width:5px;height:1.6px;background:#222"></div>
<div class="ab" style="left:149px;top:577.5px;width:3px;height:1px;background:#333"></div>
<div class="ab" style="left:127px;top:246px;width:25px;height:1px;background:#e0e0e0"></div>
<div class="ab" style="left:152px;top:246px;width:857px;height:1px;background:#15171f"></div>
<div class="ab" style="left:127px;top:492px;width:25px;height:1px;background:#e0e0e0"></div>
<div class="ab" style="left:152px;top:492px;width:857px;height:1px;background:#15171f"></div>
<div class="ab" style="left:180.0px;top:121px;width:46.6px;height:240px;background:#eef0fd;border-radius:5px 5px 0 0;overflow:hidden;border-left:1px solid #2a2d3a">
<div class="ab" style="left:0;top:0;width:46.6px;height:13.3px;background:#c9d0ef"></div>
</div>
<div class="ab" style="left:226.6px;top:134px;width:1px;height:227px;background:#3a3d4a"></div>
<div class="ab" style="left:227.6px;top:134px;width:1.2px;height:227px;background:#b4b7c4"></div>
<div class="t" style="left:185.50px;top:123.00px;font-size:10.00px;color:#333;letter-spacing:0.018px;">PoofS...</div>
<div class="ab" style="left:294.0px;top:121px;width:36.6px;height:240px;background:#eef0fd;border-radius:5px 5px 0 0;overflow:hidden;border-left:1px solid #2a2d3a">
<div class="ab" style="left:0;top:0;width:36.6px;height:13.3px;background:#c9d0ef"></div>
</div>
<div class="ab" style="left:330.6px;top:134px;width:1px;height:227px;background:#3a3d4a"></div>
<div class="ab" style="left:331.6px;top:134px;width:1.2px;height:227px;background:#b4b7c4"></div>
<div class="t" style="left:299.50px;top:123.00px;font-size:10.00px;color:#333;letter-spacing:0.075px;">Poo...</div>
<div class="ab" style="left:401.0px;top:121px;width:34.2px;height:240px;background:#eef0fd;border-radius:5px 5px 0 0;overflow:hidden;border-left:1px solid #2a2d3a">
<div class="ab" style="left:0;top:0;width:34.2px;height:13.3px;background:#c9d0ef"></div>
</div>
<div class="ab" style="left:435.2px;top:134px;width:1px;height:227px;background:#3a3d4a"></div>
<div class="ab" style="left:436.2px;top:134px;width:1.2px;height:227px;background:#b4b7c4"></div>
<div class="t" style="left:406.50px;top:123.00px;font-size:10.00px;color:#333;letter-spacing:-0.016px;">Po...</div>
<div class="ab" style="left:609.2px;top:121px;width:31.2px;height:240px;background:#eef0fd;border-radius:5px 5px 0 0;overflow:hidden;border-left:1px solid #2a2d3a">
<div class="ab" style="left:0;top:0;width:31.2px;height:13.3px;background:#c9d0ef"></div>
</div>
<div class="ab" style="left:640.4px;top:134px;width:1px;height:227px;background:#3a3d4a"></div>
<div class="ab" style="left:641.4px;top:134px;width:1.2px;height:227px;background:#b4b7c4"></div>
<div class="t" style="left:614.70px;top:123.00px;font-size:10.00px;color:#333;letter-spacing:0.095px;">P...</div>
<div class="ab" style="left:893.0px;top:121px;width:33.5px;height:240px;background:#eef0fd;border-radius:5px 5px 0 0;overflow:hidden;border-left:1px solid #2a2d3a">
<div class="ab" style="left:0;top:0;width:33.5px;height:13.3px;background:#c9d0ef"></div>
</div>
<div class="ab" style="left:926.5px;top:134px;width:1px;height:227px;background:#3a3d4a"></div>
<div class="ab" style="left:927.5px;top:134px;width:1.2px;height:227px;background:#b4b7c4"></div>
<div class="t" style="left:898.50px;top:123.00px;font-size:10.00px;color:#333;letter-spacing:-0.016px;">Po...</div>
<svg class="ab" style="left:0;top:0" width="1024" height="750" viewBox="0 0 1024 750"><path d="M181.0 189.5H227.6" stroke="#8e90e8" stroke-width="1"/><path d="M188.5 187.1V191.9M189.5 185.2V194.4M190.5 183.3V194.1M191.5 184.8V193.0M192.5 184.7V193.0M193.5 185.5V193.1M194.5 185.1V191.7M195.5 186.3V191.9M196.5 185.8V192.3M197.5 186.7V192.2M198.5 187.3V191.8M199.5 186.9V190.5M200.5 186.7V190.8M201.5 186.9V191.1M202.5 186.8V190.1M203.5 187.6V190.0M204.5 187.5V190.0M205.5 188.1V190.6M206.5 188.1V189.8M207.5 188.4V190.0M208.5 188.2V189.7M209.5 188.4V189.6M210.5 188.4V189.6" stroke="#5f61d4" stroke-width="1"/><path d="M181.0 303.5H227.6" stroke="#8e90e8" stroke-width="1"/><path d="M188.5 299.6V306.1M189.5 299.3V306.3M190.5 298.4V306.8M191.5 299.4V307.0M192.5 299.8V307.3M193.5 298.8V307.1M194.5 300.1V306.8M195.5 299.7V305.7M196.5 300.0V305.6M197.5 300.0V305.3M198.5 300.5V305.7M199.5 300.9V305.5M200.5 300.3V304.6M201.5 300.1V304.3M202.5 300.4V304.3M203.5 301.7V304.5M204.5 301.8V303.9M205.5 301.7V304.1M206.5 302.0V304.0M207.5 302.2V304.0M208.5 302.4V303.8M209.5 302.4V303.5M210.5 302.4V303.4" stroke="#5f61d4" stroke-width="1"/><path d="M295.0 189.5H331.6" stroke="#8e90e8" stroke-width="1"/><path d="M297.5 186.8V190.9M298.5 186.8V191.0M299.5 186.2V191.3M300.5 186.8V191.5M301.5 187.0V191.6M302.5 186.5V191.5M303.5 187.3V191.3M304.5 187.0V190.6M305.5 187.2V190.6M306.5 187.2V190.4M307.5 187.5V190.6M308.5 187.7V190.5M309.5 187.4V189.9M310.5 187.3V189.8M311.5 187.4V189.8M312.5 188.2V189.9M313.5 188.3V189.5M314.5 188.2V189.7M315.5 188.4V189.6M316.5 188.5V189.6" stroke="#5f61d4" stroke-width="1"/><path d="M295.0 303.5H331.6" stroke="#8e90e8" stroke-width="1"/><path d="M297.5 301.1V304.2M298.5 299.9V305.0M299.5 300.8V306.0M300.5 300.9V305.4M301.5 300.7V305.3M302.5 301.0V305.4M303.5 300.6V304.4M304.5 301.7V305.2M305.5 301.0V304.4M306.5 300.8V304.9M307.5 301.9V304.7M308.5 301.7V304.4M309.5 301.7V304.8M310.5 302.1V304.4M311.5 302.2V304.1M312.5 302.3V303.8M313.5 302.3V303.8M314.5 302.2V303.7M315.5 302.6V303.5M316.5 302.3V303.4" stroke="#5f61d4" stroke-width="1"/><path d="M402.0 189.5H436.2" stroke="#8e90e8" stroke-width="1"/><path d="M406.5 187.5V190.5M407.5 187.0V191.0M408.5 185.0V191.1M409.5 187.4V191.7M410.5 186.0V191.5M411.5 187.0V191.9M412.5 187.5V190.6M413.5 187.6V190.6M414.5 187.8V191.3M415.5 187.8V190.6M416.5 188.1V190.5M417.5 188.1V190.0M418.5 188.2V190.0M419.5 188.0V190.1M420.5 188.1V189.6M421.5 188.2V189.6M422.5 188.4V189.9M423.5 188.4V189.6" stroke="#5f61d4" stroke-width="1"/><path d="M402.0 303.5H436.2" stroke="#8e90e8" stroke-width="1"/><path d="M406.5 301.3V304.1M407.5 300.8V306.2M408.5 299.3V305.2M409.5 300.9V304.9M410.5 300.8V304.9M411.5 301.2V304.7M412.5 301.7V305.2M413.5 301.3V304.1M414.5 301.2V304.6M415.5 301.5V304.5M416.5 301.5V304.0M417.5 302.2V304.0M418.5 301.8V303.9M419.5 302.3V303.6M420.5 302.1V303.9M421.5 302.5V304.0M422.5 302.0V303.7M423.5 302.3V303.7" stroke="#5f61d4" stroke-width="1"/><path d="M610.2 189.5H641.4" stroke="#8e90e8" stroke-width="1"/><path d="M616.5 187.6V190.8M617.5 187.0V190.3M618.5 187.5V190.9M619.5 187.9V190.8M620.5 188.1V190.5M621.5 188.2V190.5M622.5 188.1V190.2M623.5 188.0V190.3M624.5 188.5V189.9M625.5 188.4V189.7M626.5 188.6V189.5" stroke="#5f61d4" stroke-width="1"/><path d="M610.2 303.5H641.4" stroke="#8e90e8" stroke-width="1"/><path d="M616.5 302.1V304.1M617.5 301.0V304.6M618.5 301.2V304.9M619.5 301.2V304.1M620.5 301.9V304.3M621.5 301.1V303.8M622.5 302.1V304.1M623.5 302.3V304.0M624.5 301.8V303.6M625.5 302.4V303.8M626.5 302.5V303.5" stroke="#5f61d4" stroke-width="1"/><path d="M894.0 189.5H927.5" stroke="#8e90e8" stroke-width="1"/><path d="M899.5 187.6V190.7M900.5 186.6V191.8M901.5 187.0V191.3M902.5 186.3V190.9M903.5 186.5V191.4M904.5 186.3V191.3M905.5 186.1V191.4M906.5 187.2V190.9M907.5 187.5V190.9M908.5 187.9V190.0M909.5 187.8V190.4M910.5 187.3V190.2M911.5 187.8V189.7M912.5 188.1V189.7M913.5 188.5V189.7M914.5 188.3V189.5M915.5 188.5V189.5" stroke="#5f61d4" stroke-width="1"/><path d="M894.0 303.5H927.5" stroke="#8e90e8" stroke-width="1"/><path d="M899.5 300.9V304.5M900.5 300.6V305.7M901.5 300.0V307.3M902.5 300.7V305.3M903.5 300.9V304.8M904.5 301.1V305.6M905.5 300.5V304.4M906.5 300.6V304.5M907.5 301.6V304.8M908.5 302.0V304.3M909.5 302.1V304.1M910.5 301.8V304.3M911.5 302.1V303.8M912.5 302.2V304.0M913.5 302.1V303.6M914.5 302.3V303.7M915.5 302.5V303.9" stroke="#5f61d4" stroke-width="1"/></svg>
<div class="ab" style="left:153px;top:366px;width:264.5px;height:240px;background:#aac1ef;border-radius:5px 5px 0 0;overflow:hidden">
<div class="ab" style="left:0;top:0;width:264.5px;height:14.7px;background:#c9d3f1;border-top:1px solid #8f9cb6"></div>
</div>
<div class="ab" style="left:417px;top:380.7px;width:2.5px;height:225.3px;background:#8c90a0"></div>
<div class="t" style="left:157.30px;top:369.00px;font-size:10.30px;color:#333;letter-spacing:0.028px;">zapsplat_sound_design_fire_whoosh_...</div>
<svg class="ab" style="left:353px;top:370.5px" width="9" height="8.5"><circle cx="4.5" cy="4.2" r="3.6" fill="none" stroke="#333" stroke-width="1.1"/><path d="M4.5 1.8V4.6H2.4" fill="none" stroke="#333" stroke-width="1"/></svg>
<div class="t" style="left:362.80px;top:369.00px;font-size:10.50px;color:#333;letter-spacing:-0.557px;">86%</div>
<div class="ab" style="left:398.0px;top:373px;width:2.4px;height:2.4px;background:#222;border-radius:1px"></div>
<div class="ab" style="left:402.9px;top:373px;width:2.4px;height:2.4px;background:#222;border-radius:1px"></div>
<div class="ab" style="left:407.8px;top:373px;width:2.4px;height:2.4px;background:#222;border-radius:1px"></div>
<svg class="ab" style="left:0;top:0" width="1024" height="750" viewBox="0 0 1024 750"><path d="M153 436.5H417M153 549.5H417" stroke="#6f72d8" stroke-width="1"/><path d="M154.5 435.4V436.6M155.5 435.4V436.6M156.5 435.3V436.7M157.5 435.4V436.9M158.5 435.3V436.8M159.5 435.4V436.7M160.5 435.4V436.6M161.5 435.4V436.9M162.5 435.4V436.8M163.5 435.2V437.0M164.5 435.3V436.9M165.5 435.1V436.8M166.5 434.7V437.0M167.5 434.9V436.9M168.5 435.2V437.0M169.5 435.1V436.9M170.5 434.8V437.1M171.5 434.6V436.9M172.5 434.6V437.2M173.5 434.9V437.1M174.5 434.2V437.3M175.5 434.7V437.1M176.5 434.7V437.5M177.5 434.1V437.4M178.5 434.6V437.4M179.5 434.3V437.3M180.5 434.1V437.6M181.5 433.7V437.6M182.5 433.8V437.8M183.5 433.6V438.0M184.5 434.4V437.9M185.5 434.1V437.8M186.5 433.7V437.8M187.5 433.7V438.0M188.5 432.5V437.5M189.5 433.7V437.4M190.5 433.5V437.5M191.5 432.9V438.0M192.5 433.3V437.5M193.5 432.4V438.4M194.5 433.3V438.2M195.5 433.8V438.1M196.5 432.8V438.3M197.5 433.2V438.4M198.5 433.0V438.6M199.5 432.6V438.3M200.5 433.3V438.6M201.5 432.2V438.4M202.5 431.7V439.1M203.5 433.1V438.9M204.5 431.8V438.8M205.5 432.5V438.3M206.5 432.5V438.5M207.5 432.0V439.7M208.5 432.3V439.1M209.5 430.8V439.1M210.5 432.3V439.4M211.5 430.9V440.2M212.5 431.4V439.2M213.5 430.9V439.6M214.5 428.1V440.9M215.5 429.6V439.4M216.5 429.5V442.6M217.5 430.2V439.9M218.5 430.8V440.2M219.5 429.1V442.0M220.5 428.6V441.1M221.5 430.6V442.2M222.5 429.5V442.1M223.5 428.0V443.8M224.5 426.6V441.9M225.5 429.2V443.4M226.5 428.0V444.2M227.5 425.4V444.1M228.5 426.0V445.9M229.5 427.9V446.6M230.5 426.4V446.3M231.5 422.0V444.6M232.5 426.0V449.3M233.5 424.6V443.7M234.5 424.4V450.0M235.5 425.7V447.1M236.5 423.4V448.7M237.5 426.8V446.5M238.5 424.6V446.7M239.5 426.1V446.2M240.5 426.5V448.8M241.5 420.0V445.6M242.5 424.1V444.8M243.5 424.9V449.3M244.5 423.0V445.5M245.5 421.1V450.7M246.5 425.6V448.2M247.5 423.3V447.8M248.5 420.2V449.6M249.5 424.5V447.8M250.5 415.0V450.6M251.5 424.4V450.2M252.5 421.5V462.0M253.5 421.2V448.4M254.5 407.0V451.3M255.5 406.5V464.0M256.5 409.0V450.0M257.5 422.6V460.0M258.5 414.0V457.0M259.5 418.2V454.2M260.5 408.0V452.4M261.5 406.4V458.4M262.5 420.6V462.5M263.5 419.6V450.9M264.5 420.2V454.7M265.5 422.9V461.0M266.5 412.9V447.9M267.5 421.4V452.5M268.5 421.6V458.0M269.5 421.0V452.4M270.5 421.4V449.1M271.5 423.4V446.3M272.5 422.6V451.0M273.5 423.5V448.4M274.5 425.7V450.3M275.5 423.0V447.0M276.5 424.0V448.5M277.5 424.2V444.5M278.5 428.0V445.5M279.5 427.2V447.9M280.5 425.5V445.7M281.5 424.3V445.5M282.5 424.8V442.6M283.5 425.9V444.0M284.5 427.4V442.7M285.5 426.7V444.2M286.5 424.8V446.7M287.5 424.1V444.9M288.5 428.4V443.7M289.5 426.5V442.1M290.5 426.9V444.0M291.5 426.3V443.7M292.5 427.9V443.2M293.5 428.5V444.2M294.5 426.0V441.7M295.5 428.8V444.4M296.5 425.1V442.1M297.5 426.1V442.8M298.5 426.7V441.5M299.5 428.5V442.6M300.5 427.7V443.1M301.5 427.3V442.2M302.5 425.9V443.7M303.5 429.5V443.4M304.5 428.7V441.5M305.5 428.1V442.4M306.5 429.5V443.2M307.5 430.3V440.6M308.5 428.5V441.8M309.5 430.4V442.1M310.5 429.6V441.5M311.5 426.6V443.9M312.5 428.4V441.7M313.5 429.7V440.7M314.5 429.1V442.4M315.5 428.9V442.1M316.5 429.7V443.4M317.5 429.7V440.9M318.5 429.2V439.9M319.5 431.2V440.4M320.5 430.7V439.9M321.5 430.6V439.8M322.5 429.2V441.5M323.5 429.7V440.1M324.5 429.4V441.2M325.5 431.0V440.1M326.5 431.5V440.4M327.5 430.0V440.3M328.5 428.6V439.7M329.5 430.9V440.2M330.5 430.5V439.1M331.5 432.2V439.1M332.5 431.3V440.0M333.5 431.1V439.3M334.5 431.5V440.1M335.5 430.6V439.9M336.5 431.2V439.9M337.5 431.1V439.7M338.5 431.1V440.0M339.5 431.8V439.7M340.5 432.1V438.8M341.5 432.2V438.7M342.5 431.5V439.9M343.5 432.8V439.3M344.5 433.0V439.0M345.5 433.1V438.5M346.5 432.8V439.3M347.5 432.9V438.6M348.5 432.7V438.9M349.5 432.9V439.3M350.5 432.5V439.3M351.5 433.3V439.2M352.5 432.6V438.6M353.5 431.6V438.2M354.5 433.0V438.9M355.5 433.4V438.1M356.5 432.4V438.4M357.5 433.3V438.4M358.5 433.7V438.6M359.5 433.7V438.5M360.5 433.2V438.1M361.5 432.8V437.9M362.5 432.8V437.7M363.5 433.3V438.1M364.5 433.1V437.8M365.5 433.5V438.2M366.5 434.0V437.8M367.5 432.5V438.0M368.5 433.4V437.6M369.5 434.2V438.3M370.5 433.7V437.6M371.5 434.0V437.6M372.5 434.1V437.5M373.5 433.5V437.7M374.5 433.1V437.7M375.5 433.9V437.8M376.5 433.3V437.7M377.5 434.5V437.6M378.5 433.9V437.5M379.5 434.1V437.7M380.5 434.4V437.1M381.5 434.1V437.6M382.5 434.8V437.3M383.5 434.8V437.3M384.5 434.4V437.4M385.5 434.4V437.3M386.5 434.9V437.4M387.5 434.7V437.4M388.5 434.4V437.0M389.5 434.8V437.3M390.5 434.7V437.1M391.5 435.1V437.3M392.5 434.9V437.0M393.5 434.5V437.1M394.5 435.1V437.2M395.5 434.8V437.1M396.5 435.2V436.8M397.5 435.0V436.9M398.5 435.1V437.2M399.5 435.0V436.9M400.5 435.1V436.8M401.5 435.1V437.0M402.5 435.1V436.7M403.5 435.2V436.8M404.5 435.2V436.9M405.5 435.2V436.9M406.5 435.3V436.9M407.5 435.3V437.1M408.5 435.3V436.8M409.5 435.3V436.8M410.5 435.4V436.6M411.5 435.4V436.7M412.5 435.4V436.7M413.5 435.3V436.7M414.5 435.4V436.6M415.5 435.3V436.6M416.5 435.4V436.6" stroke="#6164d3" stroke-width="1"/><path d="M154.5 548.4V549.8M155.5 548.4V549.7M156.5 548.4V549.6M157.5 548.4V549.6M158.5 548.4V549.9M159.5 548.3V549.7M160.5 548.2V549.7M161.5 548.3V550.0M162.5 548.3V549.9M163.5 548.2V549.7M164.5 547.9V550.0M165.5 548.4V549.8M166.5 548.3V549.9M167.5 548.1V550.3M168.5 548.0V550.1M169.5 548.1V550.3M170.5 548.0V550.4M171.5 548.3V550.3M172.5 547.9V550.4M173.5 547.9V550.1M174.5 548.1V550.0M175.5 547.8V551.0M176.5 547.9V550.1M177.5 548.0V550.3M178.5 547.8V550.7M179.5 547.5V550.4M180.5 547.4V550.3M181.5 547.1V550.6M182.5 547.5V550.6M183.5 546.8V550.7M184.5 546.9V550.7M185.5 546.9V551.0M186.5 546.3V550.9M187.5 546.9V550.9M188.5 546.6V550.4M189.5 546.1V550.8M190.5 545.9V551.2M191.5 545.6V550.9M192.5 545.8V550.7M193.5 546.1V551.4M194.5 545.8V551.3M195.5 545.2V550.8M196.5 545.9V552.1M197.5 545.4V550.8M198.5 544.6V551.0M199.5 543.0V551.5M200.5 544.5V551.3M201.5 545.6V551.8M202.5 545.1V551.1M203.5 545.3V552.2M204.5 544.6V551.9M205.5 544.4V552.1M206.5 543.5V552.0M207.5 544.9V551.4M208.5 544.1V551.8M209.5 542.9V552.0M210.5 543.1V552.8M211.5 540.7V553.0M212.5 541.1V552.9M213.5 542.7V552.8M214.5 543.4V551.8M215.5 542.2V552.7M216.5 543.5V552.9M217.5 541.7V553.0M218.5 542.0V552.9M219.5 540.6V554.8M220.5 540.8V554.4M221.5 543.3V553.5M222.5 540.7V554.3M223.5 540.8V553.1M224.5 538.7V553.4M225.5 542.1V555.0M226.5 539.4V555.1M227.5 540.8V556.4M228.5 540.0V555.4M229.5 537.7V554.0M230.5 537.7V554.8M231.5 538.6V555.0M232.5 538.9V560.3M233.5 537.5V558.1M234.5 538.7V556.8M235.5 537.8V559.7M236.5 537.2V556.6M237.5 539.6V558.9M238.5 535.5V557.0M239.5 537.5V560.3M240.5 539.6V561.9M241.5 537.4V562.9M242.5 539.6V560.0M243.5 535.1V559.6M244.5 538.8V565.0M245.5 535.8V561.5M246.5 536.1V562.4M247.5 534.2V564.7M248.5 533.7V564.2M249.5 537.8V563.2M250.5 535.2V571.2M251.5 527.0V562.9M252.5 537.0V568.3M253.5 533.8V573.0M254.5 523.0V564.8M255.5 534.3V574.0M256.5 531.9V564.1M257.5 519.0V563.9M258.5 534.3V565.6M259.5 516.0V574.5M260.5 509.0V570.7M261.5 531.9V566.4M262.5 519.0V573.0M263.5 535.1V564.6M264.5 521.0V565.3M265.5 534.3V566.1M266.5 531.2V572.0M267.5 535.5V561.4M268.5 531.6V566.4M269.5 536.5V561.6M270.5 532.3V563.3M271.5 538.4V564.1M272.5 533.8V565.6M273.5 534.0V559.9M274.5 536.0V560.5M275.5 535.5V558.3M276.5 532.8V560.5M277.5 539.8V559.3M278.5 540.0V559.9M279.5 536.8V558.3M280.5 536.4V559.0M281.5 539.4V557.3M282.5 537.4V557.9M283.5 538.0V555.0M284.5 536.8V557.7M285.5 537.2V558.9M286.5 534.5V556.5M287.5 538.9V557.1M288.5 539.3V555.0M289.5 538.3V554.7M290.5 541.9V555.6M291.5 541.2V556.8M292.5 539.4V556.5M293.5 541.4V556.0M294.5 540.1V556.0M295.5 538.9V556.1M296.5 541.2V556.8M297.5 539.2V555.9M298.5 540.7V554.2M299.5 542.3V553.8M300.5 541.0V556.3M301.5 541.3V555.2M302.5 538.8V555.6M303.5 540.4V554.7M304.5 540.0V554.6M305.5 540.5V556.7M306.5 540.9V555.1M307.5 540.4V554.4M308.5 543.0V554.5M309.5 541.0V553.7M310.5 539.0V553.2M311.5 541.8V554.8M312.5 542.2V552.7M313.5 543.8V555.6M314.5 541.7V553.8M315.5 542.0V554.4M316.5 543.3V554.1M317.5 541.7V553.8M318.5 542.7V553.7M319.5 542.9V552.6M320.5 543.2V553.9M321.5 542.6V552.4M322.5 542.5V553.8M323.5 543.5V553.1M324.5 543.9V553.2M325.5 543.1V553.3M326.5 543.5V552.5M327.5 543.3V552.0M328.5 543.1V552.3M329.5 544.6V552.4M330.5 543.5V551.9M331.5 543.0V551.7M332.5 544.6V552.1M333.5 543.7V552.0M334.5 544.1V551.5M335.5 543.8V552.1M336.5 544.2V551.2M337.5 544.5V552.2M338.5 544.3V551.2M339.5 544.2V551.6M340.5 544.1V551.5M341.5 544.3V551.9M342.5 544.3V551.3M343.5 544.8V551.4M344.5 544.8V551.0M345.5 544.6V552.6M346.5 544.7V551.2M347.5 545.1V551.3M348.5 545.7V550.9M349.5 545.4V551.6M350.5 544.9V551.8M351.5 544.9V551.4M352.5 545.2V551.4M353.5 545.4V551.5M354.5 545.4V550.8M355.5 545.6V550.9M356.5 545.5V551.3M357.5 546.3V550.8M358.5 546.0V550.6M359.5 546.1V550.8M360.5 546.0V550.8M361.5 545.3V550.7M362.5 546.9V550.4M363.5 546.4V550.5M364.5 546.7V550.5M365.5 547.0V550.3M366.5 546.4V550.5M367.5 545.6V550.9M368.5 546.4V550.9M369.5 546.3V550.6M370.5 546.8V550.5M371.5 546.8V550.7M372.5 547.1V550.1M373.5 547.4V550.4M374.5 546.5V550.3M375.5 546.7V550.2M376.5 547.4V550.3M377.5 547.3V550.0M378.5 547.1V550.2M379.5 547.1V550.1M380.5 547.2V550.0M381.5 546.9V550.4M382.5 547.5V550.1M383.5 547.7V550.1M384.5 547.5V550.0M385.5 547.9V549.8M386.5 548.1V550.0M387.5 548.1V550.0M388.5 547.8V550.1M389.5 547.7V550.1M390.5 547.9V549.9M391.5 547.8V550.0M392.5 548.2V550.1M393.5 547.8V550.0M394.5 548.0V549.9M395.5 547.8V549.9M396.5 547.9V549.7M397.5 548.2V549.7M398.5 547.9V549.8M399.5 548.0V549.8M400.5 548.1V549.7M401.5 548.3V549.7M402.5 548.2V549.7M403.5 548.2V549.6M404.5 548.1V549.8M405.5 548.4V549.8M406.5 548.3V549.6M407.5 548.2V550.0M408.5 548.4V549.7M409.5 548.3V549.6M410.5 548.4V549.6M411.5 548.4V549.6M412.5 548.3V549.7M413.5 548.3V549.6M414.5 548.4V549.6M415.5 548.4V549.7M416.5 548.4V549.6" stroke="#6164d3" stroke-width="1"/></svg>
<div class="ab" style="left:153px;top:246px;width:856px;height:1px;background:#15171f"></div>
<div class="ab" style="left:153px;top:492px;width:856px;height:1px;background:#15171f"></div>
<div class="ab" style="left:536px;top:389px;width:296px;height:161px;background:#f0f0f0;border-radius:8px;overflow:hidden;box-shadow:0 0 0 1px rgba(40,40,50,0.25),0 6px 22px rgba(0,0,0,0.38)">
<div class="ab" style="left:0;top:0;width:296px;height:24px;background:#f6f4d8"></div>
</div>
<div class="t" style="left:543.80px;top:397.00px;font-size:10.30px;color:#222;letter-spacing:-0.555px;">Low-Pass Filter</div>
<div class="ab" style="left:734px;top:400px;width:9px;height:1.2px;background:#333"></div>
<div class="ab" style="left:771px;top:396.2px;width:8.6px;height:8.4px;border:1.2px solid #333;border-radius:1.5px"></div>
<svg class="ab" style="left:808.5px;top:396.2px" width="9" height="9"><path d="M0.6 0.6 L8.4 8.4 M8.4 0.6 L0.6 8.4" stroke="#333" stroke-width="1.1"/></svg>
<div class="ab" style="left:542px;top:418.6px;width:91.4px;height:16.7px;background:#fdfdfd;border:1px solid #d6d6d6;border-radius:3px"></div>
<div class="t" style="left:549.00px;top:423.00px;font-size:10.30px;color:#222;letter-spacing:-0.377px;">Presets &amp; settings</div>
<div class="t" style="left:544.80px;top:453.00px;font-size:10.30px;color:#222;letter-spacing:-0.438px;">Frequency (Hz):</div>
<div class="ab" style="left:665px;top:450px;width:147px;height:17.7px;background:#fff;border-bottom:2px solid #1a6fcc"></div>
<div class="ab" style="left:669.4px;top:451.2px;width:27.4px;height:12.3px;background:#0a64d2"></div>
<div class="t" style="left:671.00px;top:453.00px;font-size:9.40px;color:#fff;letter-spacing:-0.690px;">1000.0</div>
<div class="t" style="left:545.10px;top:480.00px;font-size:10.30px;color:#222;letter-spacing:-0.236px;">Roll-off (dB per octave):</div>
<div class="ab" style="left:665px;top:476.5px;width:147px;height:17.7px;background:#fdfdfd;border:1px solid #d6d6d6;border-radius:3px"></div>
<div class="t" style="left:668.20px;top:481.00px;font-size:9.60px;color:#222;letter-spacing:-0.471px;">12 dB</div>
<svg class="ab" style="left:801px;top:483px" width="9" height="6"><path d="M0.8 0.8 L4.5 4.6 L8.2 0.8" fill="none" stroke="#555" stroke-width="1.1"/></svg>
<div class="ab" style="left:542.1px;top:528.1px;width:59.0px;height:16.1px;background:#fdfdfd;border:1px solid #d6d6d6;border-radius:3.5px"></div>
<div class="t" style="left:554.20px;top:532.00px;font-size:10.30px;color:#222;letter-spacing:-0.405px;">Preview</div>
<div class="ab" style="left:701.0px;top:528.1px;width:59.0px;height:16.1px;background:#fdfdfd;border:1px solid #d6d6d6;border-radius:3.5px"></div>
<div class="t" style="left:715.30px;top:532.00px;font-size:10.30px;color:#222;letter-spacing:-0.472px;">Cancel</div>
<div class="ab" style="left:767.7px;top:528.1px;width:59.0px;height:16.1px;background:#fdfdfd;border:1.6px solid #2a78cc;border-radius:3.5px"></div>
<div class="t" style="left:784.30px;top:532.00px;font-size:10.30px;color:#222;letter-spacing:-0.016px;">Apply</div>
<div class="ab" style="left:0;top:662px;width:1024px;height:14px;background:#f0f0f0"></div>
<div class="ab" style="left:170px;top:668px;width:717px;height:2px;background:#888"></div>
<div class="ab" style="left:0;top:676px;width:1024px;height:53px;background:#f8f8f8"></div>
<div class="grip" style="left:2px;top:697px"><i style="left:0px;top:0px"></i><i style="left:4px;top:0px"></i><i style="left:0px;top:4px"></i><i style="left:4px;top:4px"></i><i style="left:0px;top:8px"></i><i style="left:4px;top:8px"></i></div>
<div class="t" style="left:13.60px;top:686.00px;font-size:10.50px;color:#333;letter-spacing:0.022px;">Tempo</div>
<div class="t" style="left:67.70px;top:686.00px;font-size:10.50px;color:#333;letter-spacing:-0.208px;">Time Signature</div>
<div class="ab" style="left:13.6px;top:701.7px;width:34.0px;height:18.3px;background:#fff;border:1px solid #e4e4e4;border-bottom:1px solid #a8a8a8;border-radius:2px"></div>
<div class="t" style="left:18.30px;top:705.00px;font-size:10.50px;color:#333;letter-spacing:-0.787px;">119.08</div>
<div class="ab" style="left:49.5px;top:702.6px;width:11.9px;height:16.2px;background:#fcfcfc;border:1px solid #e0e0e0;border-radius:2px"></div>
<svg class="ab" style="left:51.5px;top:703.1px" width="8" height="16"><path d="M1 5 L4 2 L7 5 Z M1 11 L4 14 L7 11 Z" fill="#222"/></svg>
<div class="ab" style="left:50.5px;top:710.7px;width:9.9px;height:1px;background:#e6e6e6"></div>
<div class="ab" style="left:67.7px;top:701.7px;width:25.6px;height:18.3px;background:#fff;border:1px solid #e4e4e4;border-bottom:1px solid #a8a8a8;border-radius:2px"></div>
<div class="t" style="left:71.70px;top:705.00px;font-size:10.50px;color:#333;">4</div>
<div class="ab" style="left:95.5px;top:702.6px;width:12.1px;height:16.2px;background:#fcfcfc;border:1px solid #e0e0e0;border-radius:2px"></div>
<svg class="ab" style="left:97.5px;top:703.1px" width="8" height="16"><path d="M1 5 L4 2 L7 5 Z M1 11 L4 14 L7 11 Z" fill="#222"/></svg>
<div class="ab" style="left:96.5px;top:710.7px;width:10.1px;height:1px;background:#e6e6e6"></div>
<div class="t" style="left:112.00px;top:706.00px;font-size:11.00px;color:#333;">/</div>
<div class="ab" style="left:121.2px;top:701.7px;width:39.8px;height:18.3px;background:#fdfdfd;border:1px solid #e4e4e4;border-bottom:1px solid #a8a8a8;border-radius:2px"></div>
<div class="t" style="left:123.70px;top:705.00px;font-size:10.50px;color:#333;">4</div>
<svg class="ab" style="left:151px;top:709.5px" width="7" height="4"><path d="M0.5 0.5 L3.5 3.5 L6.5 0.5" fill="none" stroke="#555" stroke-width="1"/></svg>
<div class="grip" style="left:172px;top:697px"><i style="left:0px;top:0px"></i><i style="left:4px;top:0px"></i><i style="left:0px;top:4px"></i><i style="left:4px;top:4px"></i><i style="left:0px;top:8px"></i><i style="left:4px;top:8px"></i></div>
<div class="ab" style="left:184.1px;top:685.6px;width:10.8px;height:10px;border:1px solid #555;border-radius:2px;background:#f4f4f4"></div>
<div class="t" style="left:196.50px;top:685.00px;font-size:10.50px;color:#333;letter-spacing:-0.507px;">Snap</div>
<div class="ab" style="left:184.1px;top:701.4px;width:122.5px;height:19.1px;background:#f8f8f8;border:1.5px solid #b0b0b0;border-radius:3px"></div>
<div class="ab" style="left:187.9px;top:705px;width:102.4px;height:11.7px;background:#ececec"></div>
<div class="t" style="left:188.20px;top:706.00px;font-size:10.50px;color:#9a9a9a;letter-spacing:-0.448px;">1/8</div>
<svg class="ab" style="left:296px;top:709px" width="7" height="4"><path d="M0.5 0.5 L3.5 3.5 L6.5 0.5" fill="none" stroke="#b0b0b0" stroke-width="1"/></svg>
<div class="grip" style="left:314px;top:697px"><i style="left:0px;top:0px"></i><i style="left:4px;top:0px"></i><i style="left:0px;top:4px"></i><i style="left:4px;top:4px"></i><i style="left:0px;top:8px"></i><i style="left:4px;top:8px"></i></div>
<div class="ab" style="left:322.3px;top:686.3px;width:188.7px;height:31.7px;background:#2f3244;border:1.3px solid #b8b8b8"></div>
<div class="t" style="left:326.94px;top:693.00px;font-size:21.80px;color:#f4f4f4;">0</div>
<div class="t" style="left:343.44px;top:693.00px;font-size:21.80px;color:#f4f4f4;">0</div>
<div class="t" style="left:364.14px;top:693.00px;font-size:21.80px;color:#f4f4f4;">h</div>
<div class="t" style="left:385.14px;top:693.00px;font-size:21.80px;color:#f4f4f4;">0</div>
<div class="t" style="left:401.84px;top:693.00px;font-size:21.80px;color:#f4f4f4;">0</div>
<div class="t" style="left:422.62px;top:693.00px;font-size:21.80px;color:#f4f4f4;">m</div>
<div class="t" style="left:448.84px;top:693.00px;font-size:21.80px;color:#f4f4f4;">0</div>
<div class="t" style="left:465.44px;top:693.00px;font-size:21.80px;color:#f4f4f4;">0</div>
<div class="t" style="left:486.45px;top:693.00px;font-size:21.80px;color:#f4f4f4;">s</div>
<svg class="ab" style="left:503.5px;top:701.5px" width="6" height="3.5"><path d="M0 0 H6 L3 3.2 Z" fill="#fff"/></svg>
<div class="ab" style="left:515px;top:678px;width:1px;height:50px;background:#dedede"></div>
<div class="grip" style="left:519px;top:697px"><i style="left:0px;top:0px"></i><i style="left:4px;top:0px"></i><i style="left:0px;top:4px"></i><i style="left:4px;top:4px"></i><i style="left:0px;top:8px"></i><i style="left:4px;top:8px"></i></div>
<div class="t" style="left:531.00px;top:683.00px;font-size:10.30px;color:#333;letter-spacing:-0.171px;">Selection</div>
<div class="btn" style="left:554px;top:700px;width:18px;height:18px;background:#dfe0e5"></div>
<svg class="ab" style="left:555.3px;top:702px" width="16" height="16" viewBox="0 0 16 16"><path d="M11.62 6.54 L13.46 6.74 L13.46 9.26 L11.62 9.46 L11.07 10.40 L11.82 12.10 L9.64 13.36 L8.54 11.86 L7.46 11.86 L6.36 13.36 L4.18 12.10 L4.93 10.40 L4.38 9.46 L2.54 9.26 L2.54 6.74 L4.38 6.54 L4.93 5.60 L4.18 3.90 L6.36 2.64 L7.46 4.14 L8.54 4.14 L9.64 2.64 L11.82 3.90 L11.07 5.60 Z" fill="none" stroke="#333" stroke-width="1.25" stroke-linejoin="round"/><circle cx="8" cy="8" r="1.5" fill="none" stroke="#333" stroke-width="1.2"/></svg>
<div class="ab" style="left:578px;top:681.4px;width:133.7px;height:17.8px;background:#2f3244;border:1.3px solid #c0c0c0"></div>
<div class="t" style="left:581.03px;top:686.00px;font-size:11.40px;color:#eeeef4;">0</div>
<div class="t" style="left:590.43px;top:686.00px;font-size:11.40px;color:#eeeef4;">0</div>
<div class="t" style="left:600.03px;top:686.00px;font-size:11.40px;color:#eeeef4;">h</div>
<div class="t" style="left:610.13px;top:686.00px;font-size:11.40px;color:#eeeef4;">0</div>
<div class="t" style="left:619.53px;top:686.00px;font-size:11.40px;color:#eeeef4;">0</div>
<div class="t" style="left:629.35px;top:686.00px;font-size:11.40px;color:#eeeef4;">m</div>
<div class="t" style="left:641.93px;top:686.00px;font-size:11.40px;color:#eeeef4;">0</div>
<div class="t" style="left:651.23px;top:686.00px;font-size:11.40px;color:#eeeef4;">0</div>
<div class="t" style="left:657.92px;top:686.00px;font-size:11.40px;color:#eeeef4;">.</div>
<div class="t" style="left:662.53px;top:686.00px;font-size:11.40px;color:#eeeef4;">0</div>
<div class="t" style="left:671.93px;top:686.00px;font-size:11.40px;color:#eeeef4;">0</div>
<div class="t" style="left:681.03px;top:686.00px;font-size:11.40px;color:#eeeef4;">0</div>
<div class="t" style="left:690.75px;top:686.00px;font-size:11.40px;color:#eeeef4;">s</div>
<svg class="ab" style="left:701.5px;top:689.6px" width="7" height="3.5"><path d="M0 0 H7 L3.5 3.3 Z" fill="#fff"/></svg>
<div class="ab" style="left:578px;top:701.2px;width:133.7px;height:17.8px;background:#2f3244;border:1.3px solid #c0c0c0"></div>
<div class="t" style="left:581.03px;top:706.00px;font-size:11.40px;color:#eeeef4;">0</div>
<div class="t" style="left:590.43px;top:706.00px;font-size:11.40px;color:#eeeef4;">0</div>
<div class="t" style="left:600.03px;top:706.00px;font-size:11.40px;color:#eeeef4;">h</div>
<div class="t" style="left:610.13px;top:706.00px;font-size:11.40px;color:#eeeef4;">0</div>
<div class="t" style="left:619.53px;top:706.00px;font-size:11.40px;color:#eeeef4;">0</div>
<div class="t" style="left:629.35px;top:706.00px;font-size:11.40px;color:#eeeef4;">m</div>
<div class="t" style="left:641.93px;top:706.00px;font-size:11.40px;color:#eeeef4;">0</div>
<div class="t" style="left:651.23px;top:706.00px;font-size:11.40px;color:#eeeef4;">6</div>
<div class="t" style="left:657.92px;top:706.00px;font-size:11.40px;color:#eeeef4;">.</div>
<div class="t" style="left:662.53px;top:706.00px;font-size:11.40px;color:#eeeef4;">4</div>
<div class="t" style="left:671.93px;top:706.00px;font-size:11.40px;color:#eeeef4;">6</div>
<div class="t" style="left:681.03px;top:706.00px;font-size:11.40px;color:#eeeef4;">5</div>
<div class="t" style="left:690.75px;top:706.00px;font-size:11.40px;color:#eeeef4;">s</div>
<svg class="ab" style="left:701.5px;top:709.4px" width="7" height="3.5"><path d="M0 0 H7 L3.5 3.3 Z" fill="#fff"/></svg>
<div class="grip" style="left:718px;top:683px"><i style="left:0px;top:0px"></i><i style="left:4px;top:0px"></i><i style="left:0px;top:4px"></i><i style="left:4px;top:4px"></i><i style="left:0px;top:8px"></i><i style="left:4px;top:8px"></i></div>
<div class="btn" style="left:726px;top:679px;width:22px;height:22px;background:#dfe0e5"></div>
<svg class="ab" style="left:731px;top:683px" width="13" height="13"><path d="M0.5 0.5 L12.5 6.5 L0.5 12.5 Z" fill="#3d8a5e"/></svg>
<div class="ab" style="left:752.7px;top:684px;width:4.2px;height:1.4px;background:#333"></div>
<div class="ab" style="left:859.4px;top:684px;width:4.4px;height:1.4px;background:#333"></div>
<div class="ab" style="left:860.9px;top:682.5px;width:1.4px;height:4.4px;background:#333"></div>
<div class="ab" style="left:753px;top:693px;width:113px;height:2px;background:#c8d4e2"></div>
<div class="ab" style="left:753.0px;top:691px;width:1px;height:2px;background:#c8d4e2"></div>
<div class="ab" style="left:761.6px;top:691px;width:1px;height:2px;background:#c8d4e2"></div>
<div class="ab" style="left:770.2px;top:691px;width:1px;height:2px;background:#c8d4e2"></div>
<div class="ab" style="left:778.8px;top:691px;width:1px;height:2px;background:#c8d4e2"></div>
<div class="ab" style="left:787.5px;top:691px;width:1px;height:2px;background:#c8d4e2"></div>
<div class="ab" style="left:796.1px;top:691px;width:1px;height:2px;background:#c8d4e2"></div>
<div class="ab" style="left:804.7px;top:691px;width:1px;height:2px;background:#c8d4e2"></div>
<div class="ab" style="left:813.3px;top:691px;width:1px;height:2px;background:#c8d4e2"></div>
<div class="ab" style="left:821.9px;top:691px;width:1px;height:2px;background:#c8d4e2"></div>
<div class="ab" style="left:830.5px;top:691px;width:1px;height:2px;background:#c8d4e2"></div>
<div class="ab" style="left:839.2px;top:691px;width:1px;height:2px;background:#c8d4e2"></div>
<div class="ab" style="left:847.8px;top:691px;width:1px;height:2px;background:#c8d4e2"></div>
<div class="ab" style="left:856.4px;top:691px;width:1px;height:2px;background:#c8d4e2"></div>
<div class="ab" style="left:865.0px;top:691px;width:1px;height:2px;background:#c8d4e2"></div>
<div class="ab" style="left:785px;top:687px;width:10px;height:10px;border:1.3px solid #222;border-radius:50%;background:#fff"></div>
<div class="ab" style="left:871px;top:678px;width:1px;height:25px;background:#dcdcdc"></div>
<div class="ab" style="left:873px;top:678px;width:1px;height:25px;background:#dcdcdc"></div>
<div class="ab" style="left:717px;top:702px;width:307px;height:1px;background:#e2e2e2"></div>
<div class="ab" style="left:0;top:729px;width:1024px;height:1px;background:#dcdcdc"></div>
<div class="ab" style="left:0;top:730px;width:1024px;height:20px;background:#f0f0f0"></div>
<div class="ab" style="left:0;top:748px;width:1024px;height:2px;background:#b8b8b8"></div>
<div class="ab" style="left:6px;top:731px;width:1px;height:19px;background:#dcdcdc"></div>
<div class="ab" style="left:147px;top:731px;width:1px;height:19px;background:#dcdcdc"></div>
<div class="ab" style="left:880px;top:731px;width:1px;height:19px;background:#dcdcdc"></div>
<div class="t" style="left:10.90px;top:736.00px;font-size:10.30px;color:#222;letter-spacing:-0.390px;">Stopped.</div>
<div class="t" style="left:151.60px;top:736.00px;font-size:10.30px;color:#222;letter-spacing:-0.300px;">Click and drag to select audio</div>
</body></html>
